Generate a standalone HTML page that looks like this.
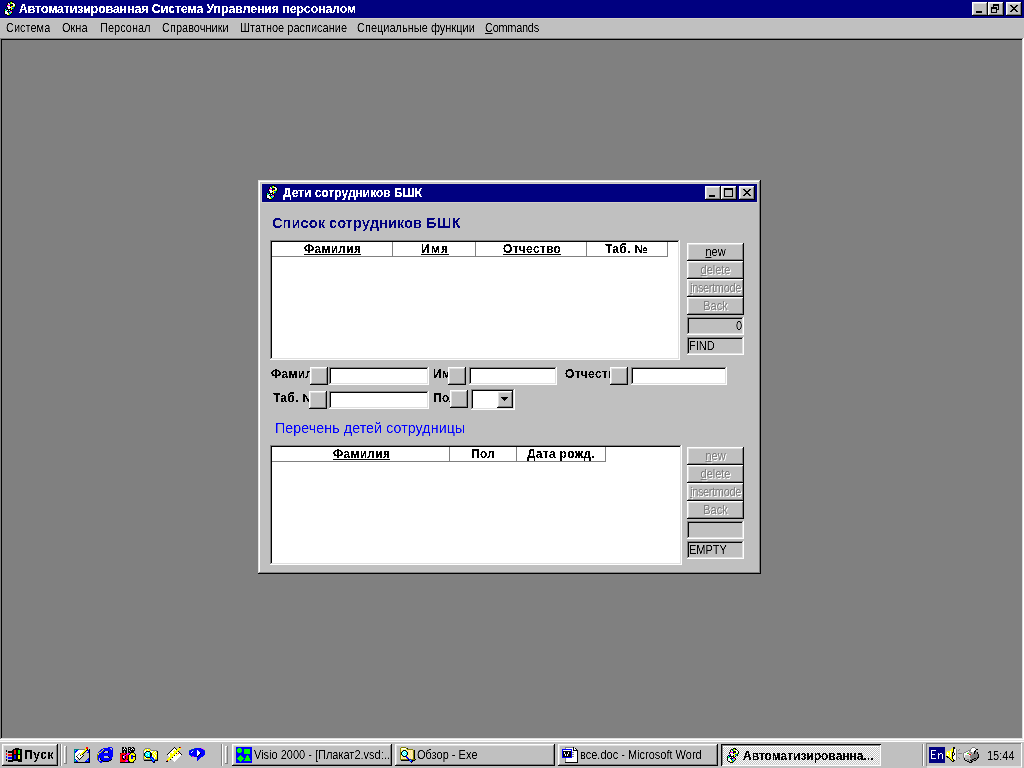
<!DOCTYPE html>
<html><head><meta charset="utf-8">
<style>
*{box-sizing:border-box;margin:0;padding:0}
html,body{width:1024px;height:768px;overflow:hidden;background:#c0c0c0;font-family:"Liberation Sans",sans-serif;font-size:11px;color:#000}
.a{position:absolute}
.t{position:absolute;white-space:nowrap;line-height:13px;filter:url(#crisp)}
.t.b{filter:url(#crispb)}
.s{transform:scaleY(1.125);transform-origin:0 10px}
.b{font-weight:bold}
.raised{position:absolute;background:#c0c0c0;box-shadow:inset -1px -1px #000,inset 1px 1px #fff,inset -2px -2px #808080,inset 2px 2px #dfdfdf}
.sunk{position:absolute;background:#fff;box-shadow:inset -1px -1px #fff,inset 1px 1px #808080,inset -2px -2px #dfdfdf,inset 2px 2px #000}
.sunkg{position:absolute;background:#c0c0c0;box-shadow:inset -1px -1px #fff,inset 1px 1px #808080,inset -2px -2px #dfdfdf,inset 2px 2px #000}
.thin{position:absolute;box-shadow:inset -1px -1px #fff,inset 1px 1px #808080}
.cap{position:absolute;background:#000080}
.cbtn{position:absolute;width:16px;height:14px;background:#c0c0c0;box-shadow:inset -1px -1px #000,inset 1px 1px #fff,inset -2px -2px #808080,inset 2px 2px #dfdfdf}
.dis{color:#808080;text-shadow:1px 1px #fff}
.u{text-decoration:underline}
.hl{position:absolute;background:#808080}
</style></head>
<body><svg width="0" height="0" style="position:absolute"><filter id="crisp" x="0" y="0" width="100%" height="100%"><feComponentTransfer><feFuncA type="table" tableValues="0 0 0.5 1 1"/></feComponentTransfer></filter><filter id="crispb" x="0" y="0" width="100%" height="100%"><feComponentTransfer><feFuncA type="discrete" tableValues="0 0 0 0 1 1 1 1 1"/></feComponentTransfer></filter><filter id="crisph" x="0" y="0" width="100%" height="100%"><feComponentTransfer><feFuncA type="discrete" tableValues="0 0 0 0 0 1 1 1 1"/></feComponentTransfer></filter></svg>
<!-- main title bar -->
<div class="cap" style="left:0;top:0;width:1024px;height:18px"></div>
<div class="a" style="left:0;top:18px;width:1024px;height:1px;background:#d4d0c8"></div>
<div class="t b" style="left:19px;top:3px;font-size:12.2px;color:#fff">Автоматизированная Система Управления персоналом</div>
<div class="cbtn" style="left:972px;top:2px"></div>
<div class="cbtn" style="left:988px;top:2px"></div>
<div class="cbtn" style="left:1006px;top:2px"></div>

<!-- menu -->
<div class="s t" style="left:6px;top:22px">Система</div>
<div class="s t" style="left:62px;top:22px">Окна</div>
<div class="s t" style="left:100px;top:22px">Персонал</div>
<div class="s t" style="left:162px;top:22px">Справочники</div>
<div class="s t" style="left:240px;top:22px">Штатное расписание</div>
<div class="s t" style="left:357px;top:22px">Специальные функции</div>
<div class="s t" style="left:485px;top:22px;letter-spacing:-0.3px"><span class="u">C</span>ommands</div>

<!-- MDI client -->
<div class="a" style="left:0;top:38px;width:1024px;height:702px;background:#808080;box-shadow:inset -1px -1px #fff,inset 1px 1px #808080,inset -2px -2px #dfdfdf,inset 2px 2px #000"></div>

<!-- child window -->
<div class="a" style="left:258px;top:180px;width:503px;height:394px;background:#c0c0c0;box-shadow:inset -1px -1px #000,inset 1px 1px #dfdfdf,inset -2px -2px #808080,inset 2px 2px #fff"></div>
<div class="a" style="left:261px;top:183px;width:497px;height:20px;border:1px solid #d4d0c8"></div>
<div class="cap" style="left:262px;top:184px;width:495px;height:18px"></div>
<div class="t b" style="left:283px;top:187px;font-size:12px;color:#fff">Дети сотрудников БШК</div>
<div class="cbtn" style="left:705px;top:186px"></div>
<div class="cbtn" style="left:721px;top:186px"></div>
<div class="cbtn" style="left:739px;top:186px"></div>

<div class="t b" style="left:272px;top:214px;font-size:14.7px;line-height:18px;color:#000080;filter:url(#crisph)">Список сотрудников БШК</div>

<!-- listbox 1 -->
<div class="sunk" style="left:270px;top:240px;width:410px;height:120px"></div>

<!-- buttons col 1 -->
<div class="raised" style="left:687px;top:243px;width:57px;height:18px"></div>
<div class="raised" style="left:687px;top:261px;width:57px;height:18px"></div>
<div class="raised" style="left:687px;top:279px;width:57px;height:18px"></div>
<div class="raised" style="left:687px;top:297px;width:57px;height:18px"></div>
<div class="sunkg" style="left:687px;top:317px;width:57px;height:18px"></div>
<div class="sunkg" style="left:687px;top:337px;width:57px;height:18px"></div>

<!-- row fields -->
<div class="raised" style="left:310px;top:367px;width:18px;height:18px"></div>
<div class="sunk" style="left:329px;top:367px;width:100px;height:18px"></div>
<div class="raised" style="left:448px;top:367px;width:18px;height:18px"></div>
<div class="sunk" style="left:469px;top:367px;width:88px;height:18px"></div>
<div class="raised" style="left:610px;top:367px;width:18px;height:18px"></div>
<div class="sunk" style="left:631px;top:367px;width:96px;height:18px"></div>

<div class="raised" style="left:309px;top:391px;width:18px;height:18px"></div>
<div class="sunk" style="left:329px;top:391px;width:100px;height:18px"></div>
<div class="raised" style="left:450px;top:390px;width:18px;height:18px"></div>
<div class="sunk" style="left:471px;top:389px;width:44px;height:21px"></div>

<div class="t" style="left:275px;top:420px;font-size:14.2px;line-height:17px;color:#0000ff;letter-spacing:0.1px">Перечень детей сотрудницы</div>

<!-- listbox 2 -->
<div class="sunk" style="left:270px;top:445px;width:412px;height:120px"></div>
<div class="raised" style="left:687px;top:447px;width:57px;height:18px"></div>
<div class="raised" style="left:687px;top:465px;width:57px;height:18px"></div>
<div class="raised" style="left:687px;top:483px;width:57px;height:18px"></div>
<div class="raised" style="left:687px;top:501px;width:57px;height:18px"></div>
<div class="sunkg" style="left:687px;top:521px;width:57px;height:18px"></div>
<div class="sunkg" style="left:687px;top:541px;width:57px;height:18px"></div>


<!-- list1 header -->
<div class="hl" style="left:272px;top:256px;width:396px;height:1px"></div>
<div class="hl" style="left:392px;top:242px;width:1px;height:14px"></div>
<div class="hl" style="left:475px;top:242px;width:1px;height:14px"></div>
<div class="hl" style="left:586px;top:242px;width:1px;height:14px"></div>
<div class="hl" style="left:667px;top:242px;width:1px;height:15px"></div>
<div class="t b u" style="left:304px;top:243px;font-size:12px;letter-spacing:0.3px">Фамилия</div>
<div class="t b u" style="left:421px;top:243px;font-size:12px;letter-spacing:1.3px">Имя</div>
<div class="t b u" style="left:503px;top:243px;font-size:12px;letter-spacing:0.3px">Отчество</div>
<div class="t b" style="left:605px;top:243px;font-size:12px;letter-spacing:0.3px">Таб. №</div>
<!-- list1 buttons text -->
<div class="s t" style="left:687px;top:246px;width:57px;text-align:center"><span class="u">n</span>ew</div>
<div class="s t dis" style="left:687px;top:264px;width:57px;text-align:center"><span class="u">d</span>elete</div>
<div class="s t dis" style="left:687px;top:282px;width:57px;text-align:center"><span style="letter-spacing:-0.35px"><span class="u">i</span>nsertmode</span></div>
<div class="s t dis" style="left:687px;top:300px;width:57px;text-align:center">Back</div>
<div class="s t" style="left:687px;top:320px;width:55px;text-align:right">0</div>
<div class="s t" style="left:689px;top:340px">FIND</div>
<!-- labels -->
<div class="a" style="left:270px;top:364px;width:40px;height:20px;overflow:hidden"><div class="t b" style="left:1px;top:4px;font-size:12px;letter-spacing:0.3px">Фамилия</div></div>
<div class="a" style="left:430px;top:364px;width:18px;height:20px;overflow:hidden"><div class="t b" style="left:3px;top:4px;font-size:12px;letter-spacing:0.3px">Имя</div></div>
<div class="a" style="left:560px;top:364px;width:50px;height:20px;overflow:hidden"><div class="t b" style="left:5px;top:4px;font-size:12px;letter-spacing:0.3px">Отчество</div></div>
<div class="a" style="left:270px;top:388px;width:39px;height:20px;overflow:hidden"><div class="t b" style="left:3px;top:4px;font-size:12px;letter-spacing:0.3px">Таб. №</div></div>
<div class="a" style="left:430px;top:388px;width:20px;height:20px;overflow:hidden"><div class="t b" style="left:3px;top:4px;font-size:12px;letter-spacing:0.3px">Пол</div></div>
<!-- combo button -->
<div class="raised" style="left:497px;top:391px;width:16px;height:17px"></div>
<!-- list2 header -->
<div class="hl" style="left:272px;top:461px;width:334px;height:1px"></div>
<div class="hl" style="left:449px;top:447px;width:1px;height:14px"></div>
<div class="hl" style="left:516px;top:447px;width:1px;height:14px"></div>
<div class="hl" style="left:605px;top:447px;width:1px;height:15px"></div>
<div class="t b u" style="left:333px;top:448px;font-size:12px;letter-spacing:0.3px">Фамилия</div>
<div class="t b" style="left:471px;top:448px;font-size:12px;letter-spacing:0.3px">Пол</div>
<div class="t b" style="left:527px;top:448px;font-size:12px;letter-spacing:0.3px">Дата рожд.</div>
<div class="s t dis" style="left:687px;top:450px;width:57px;text-align:center"><span class="u">n</span>ew</div>
<div class="s t dis" style="left:687px;top:468px;width:57px;text-align:center"><span class="u">d</span>elete</div>
<div class="s t dis" style="left:687px;top:486px;width:57px;text-align:center"><span style="letter-spacing:-0.35px"><span class="u">i</span>nsertmode</span></div>
<div class="s t dis" style="left:687px;top:504px;width:57px;text-align:center">Back</div>
<div class="s t" style="left:689px;top:544px">EMPTY</div>

<!-- taskbar -->
<div class="a" style="left:0;top:740px;width:1024px;height:28px;background:#c0c0c0;box-shadow:inset 0 1px #dfdfdf,inset 0 2px #fff"></div>
<div class="raised" style="left:2px;top:744px;width:56px;height:22px"></div>
<div class="t b" style="left:24px;top:749px;font-size:12px;letter-spacing:0.6px">Пуск</div>
<div class="a" style="left:60px;top:744px;width:1px;height:22px;background:#808080"></div>
<div class="a" style="left:61px;top:744px;width:1px;height:22px;background:#fff"></div>
<div class="a" style="left:64px;top:746px;width:3px;height:18px;box-shadow:inset -1px -1px #808080,inset 1px 1px #fff"></div>
<div class="a" style="left:221px;top:744px;width:1px;height:22px;background:#808080"></div>
<div class="a" style="left:222px;top:744px;width:1px;height:22px;background:#fff"></div>
<div class="a" style="left:225px;top:746px;width:3px;height:18px;box-shadow:inset -1px -1px #808080,inset 1px 1px #fff"></div>
<div class="raised" style="left:232px;top:744px;width:160px;height:22px"></div>
<div class="s t" style="left:254px;top:749px">Visio 2000 - [Плакат2.vsd:...</div>
<div class="raised" style="left:395px;top:744px;width:160px;height:22px"></div>
<div class="s t" style="left:417px;top:749px">Обзор - Exe</div>
<div class="raised" style="left:558px;top:744px;width:160px;height:22px"></div>
<div class="s t" style="left:580px;top:749px">все.doc - Microsoft Word</div>
<div class="a" style="left:721px;top:744px;width:160px;height:22px;background-color:#c0c0c0;background-image:repeating-conic-gradient(#fff 0 25%,#c0c0c0 0 50%);background-size:2px 2px;box-shadow:inset 1px 1px #000,inset -1px -1px #fff,inset 2px 2px #808080,inset -2px -2px #dfdfdf,inset 0 3px #fff"></div>
<div class="t b" style="left:743px;top:750px;font-size:12px">Автоматизированна...</div>
<div class="a" style="left:922px;top:744px;width:1px;height:22px;background:#808080"></div>
<div class="a" style="left:923px;top:744px;width:1px;height:22px;background:#fff"></div>
<div class="s thin" style="left:926px;top:744px;width:96px;height:22px"></div>
<div class="a" style="left:929px;top:747px;width:16px;height:16px;background:#000080"></div>
<div class="s t" style="left:987px;top:750px">15:44</div>
<!--ICONS-->
<svg class="a" style="left:2px;top:0px" width="16" height="16" shape-rendering="crispEdges"><rect x="8" y="1" width="3" height="1" fill="#000"/><rect x="6" y="2" width="2" height="1" fill="#000"/><rect x="8" y="2" width="1" height="1" fill="#0f0"/><rect x="9" y="2" width="1" height="1" fill="#ff0"/><rect x="10" y="2" width="2" height="1" fill="#000"/><rect x="5" y="3" width="1" height="1" fill="#000"/><rect x="6" y="3" width="1" height="1" fill="#fff"/><rect x="7" y="3" width="1" height="1" fill="#00f"/><rect x="8" y="3" width="1" height="1" fill="#0f0"/><rect x="9" y="3" width="1" height="1" fill="#ff0"/><rect x="10" y="3" width="2" height="1" fill="#fff"/><rect x="12" y="3" width="1" height="1" fill="#000"/><rect x="5" y="4" width="1" height="1" fill="#000"/><rect x="6" y="4" width="1" height="1" fill="#ff0"/><rect x="7" y="4" width="1" height="1" fill="#fff"/><rect x="8" y="4" width="3" height="1" fill="#000"/><rect x="11" y="4" width="2" height="1" fill="#fff"/><rect x="13" y="4" width="1" height="1" fill="#000"/><rect x="4" y="5" width="1" height="1" fill="#000"/><rect x="5" y="5" width="3" height="1" fill="#f0f"/><rect x="8" y="5" width="1" height="1" fill="#000"/><rect x="9" y="5" width="1" height="1" fill="#000080"/><rect x="10" y="5" width="1" height="1" fill="#000"/><rect x="11" y="5" width="2" height="1" fill="#fff"/><rect x="13" y="5" width="1" height="1" fill="#000"/><rect x="4" y="6" width="1" height="1" fill="#000"/><rect x="5" y="6" width="3" height="1" fill="#fff"/><rect x="8" y="6" width="1" height="1" fill="#000"/><rect x="9" y="6" width="3" height="1" fill="#ff0"/><rect x="12" y="6" width="1" height="1" fill="#0f0"/><rect x="13" y="6" width="1" height="1" fill="#000"/><rect x="5" y="7" width="1" height="1" fill="#000"/><rect x="6" y="7" width="3" height="1" fill="#fff"/><rect x="9" y="7" width="1" height="1" fill="#ff0"/><rect x="10" y="7" width="1" height="1" fill="#00f"/><rect x="11" y="7" width="1" height="1" fill="#008080"/><rect x="12" y="7" width="1" height="1" fill="#000"/><rect x="3" y="8" width="1" height="1" fill="#000"/><rect x="4" y="8" width="1" height="1" fill="#00f"/><rect x="5" y="8" width="1" height="1" fill="#000"/><rect x="6" y="8" width="2" height="1" fill="#fff"/><rect x="8" y="8" width="1" height="1" fill="#000"/><rect x="9" y="8" width="1" height="1" fill="#ff0"/><rect x="10" y="8" width="1" height="1" fill="#0ff"/><rect x="11" y="8" width="1" height="1" fill="#008080"/><rect x="12" y="8" width="1" height="1" fill="#000"/><rect x="2" y="9" width="1" height="1" fill="#000"/><rect x="3" y="9" width="1" height="1" fill="#0ff"/><rect x="4" y="9" width="5" height="1" fill="#000"/><rect x="9" y="9" width="1" height="1" fill="#ff0"/><rect x="10" y="9" width="1" height="1" fill="#000"/><rect x="2" y="10" width="1" height="1" fill="#000"/><rect x="3" y="10" width="1" height="1" fill="#0f0"/><rect x="4" y="10" width="1" height="1" fill="#0ff"/><rect x="5" y="10" width="1" height="1" fill="#fff"/><rect x="6" y="10" width="1" height="1" fill="#000"/><rect x="7" y="10" width="1" height="1" fill="#fff"/><rect x="8" y="10" width="2" height="1" fill="#000"/><rect x="2" y="11" width="1" height="1" fill="#000"/><rect x="3" y="11" width="2" height="1" fill="#fff"/><rect x="5" y="11" width="1" height="1" fill="#000"/><rect x="6" y="11" width="1" height="1" fill="#000080"/><rect x="7" y="11" width="1" height="1" fill="#000"/><rect x="8" y="11" width="2" height="1" fill="#f0f"/><rect x="10" y="11" width="1" height="1" fill="#000"/><rect x="2" y="12" width="1" height="1" fill="#000"/><rect x="3" y="12" width="3" height="1" fill="#fff"/><rect x="6" y="12" width="1" height="1" fill="#000"/><rect x="7" y="12" width="2" height="1" fill="#0ff"/><rect x="9" y="12" width="1" height="1" fill="#ff0"/><rect x="10" y="12" width="1" height="1" fill="#000"/><rect x="2" y="13" width="1" height="1" fill="#000"/><rect x="3" y="13" width="3" height="1" fill="#fff"/><rect x="6" y="13" width="1" height="1" fill="#ff0"/><rect x="7" y="13" width="1" height="1" fill="#00f"/><rect x="8" y="13" width="1" height="1" fill="#0ff"/><rect x="9" y="13" width="1" height="1" fill="#000"/><rect x="3" y="14" width="2" height="1" fill="#000"/><rect x="5" y="14" width="1" height="1" fill="#fff"/><rect x="6" y="14" width="1" height="1" fill="#ff0"/><rect x="7" y="14" width="1" height="1" fill="#0f0"/><rect x="8" y="14" width="1" height="1" fill="#000"/><rect x="5" y="15" width="3" height="1" fill="#000"/></svg>
<svg class="a" style="left:264px;top:184px" width="16" height="16" shape-rendering="crispEdges"><rect x="8" y="1" width="3" height="1" fill="#000"/><rect x="6" y="2" width="2" height="1" fill="#000"/><rect x="8" y="2" width="1" height="1" fill="#0f0"/><rect x="9" y="2" width="1" height="1" fill="#ff0"/><rect x="10" y="2" width="2" height="1" fill="#000"/><rect x="5" y="3" width="1" height="1" fill="#000"/><rect x="6" y="3" width="1" height="1" fill="#fff"/><rect x="7" y="3" width="1" height="1" fill="#00f"/><rect x="8" y="3" width="1" height="1" fill="#0f0"/><rect x="9" y="3" width="1" height="1" fill="#ff0"/><rect x="10" y="3" width="2" height="1" fill="#fff"/><rect x="12" y="3" width="1" height="1" fill="#000"/><rect x="5" y="4" width="1" height="1" fill="#000"/><rect x="6" y="4" width="1" height="1" fill="#ff0"/><rect x="7" y="4" width="1" height="1" fill="#fff"/><rect x="8" y="4" width="3" height="1" fill="#000"/><rect x="11" y="4" width="2" height="1" fill="#fff"/><rect x="13" y="4" width="1" height="1" fill="#000"/><rect x="4" y="5" width="1" height="1" fill="#000"/><rect x="5" y="5" width="3" height="1" fill="#f0f"/><rect x="8" y="5" width="1" height="1" fill="#000"/><rect x="9" y="5" width="1" height="1" fill="#000080"/><rect x="10" y="5" width="1" height="1" fill="#000"/><rect x="11" y="5" width="2" height="1" fill="#fff"/><rect x="13" y="5" width="1" height="1" fill="#000"/><rect x="4" y="6" width="1" height="1" fill="#000"/><rect x="5" y="6" width="3" height="1" fill="#fff"/><rect x="8" y="6" width="1" height="1" fill="#000"/><rect x="9" y="6" width="3" height="1" fill="#ff0"/><rect x="12" y="6" width="1" height="1" fill="#0f0"/><rect x="13" y="6" width="1" height="1" fill="#000"/><rect x="5" y="7" width="1" height="1" fill="#000"/><rect x="6" y="7" width="3" height="1" fill="#fff"/><rect x="9" y="7" width="1" height="1" fill="#ff0"/><rect x="10" y="7" width="1" height="1" fill="#00f"/><rect x="11" y="7" width="1" height="1" fill="#008080"/><rect x="12" y="7" width="1" height="1" fill="#000"/><rect x="3" y="8" width="1" height="1" fill="#000"/><rect x="4" y="8" width="1" height="1" fill="#00f"/><rect x="5" y="8" width="1" height="1" fill="#000"/><rect x="6" y="8" width="2" height="1" fill="#fff"/><rect x="8" y="8" width="1" height="1" fill="#000"/><rect x="9" y="8" width="1" height="1" fill="#ff0"/><rect x="10" y="8" width="1" height="1" fill="#0ff"/><rect x="11" y="8" width="1" height="1" fill="#008080"/><rect x="12" y="8" width="1" height="1" fill="#000"/><rect x="2" y="9" width="1" height="1" fill="#000"/><rect x="3" y="9" width="1" height="1" fill="#0ff"/><rect x="4" y="9" width="5" height="1" fill="#000"/><rect x="9" y="9" width="1" height="1" fill="#ff0"/><rect x="10" y="9" width="1" height="1" fill="#000"/><rect x="2" y="10" width="1" height="1" fill="#000"/><rect x="3" y="10" width="1" height="1" fill="#0f0"/><rect x="4" y="10" width="1" height="1" fill="#0ff"/><rect x="5" y="10" width="1" height="1" fill="#fff"/><rect x="6" y="10" width="1" height="1" fill="#000"/><rect x="7" y="10" width="1" height="1" fill="#fff"/><rect x="8" y="10" width="2" height="1" fill="#000"/><rect x="2" y="11" width="1" height="1" fill="#000"/><rect x="3" y="11" width="2" height="1" fill="#fff"/><rect x="5" y="11" width="1" height="1" fill="#000"/><rect x="6" y="11" width="1" height="1" fill="#000080"/><rect x="7" y="11" width="1" height="1" fill="#000"/><rect x="8" y="11" width="2" height="1" fill="#f0f"/><rect x="10" y="11" width="1" height="1" fill="#000"/><rect x="2" y="12" width="1" height="1" fill="#000"/><rect x="3" y="12" width="3" height="1" fill="#fff"/><rect x="6" y="12" width="1" height="1" fill="#000"/><rect x="7" y="12" width="2" height="1" fill="#0ff"/><rect x="9" y="12" width="1" height="1" fill="#ff0"/><rect x="10" y="12" width="1" height="1" fill="#000"/><rect x="2" y="13" width="1" height="1" fill="#000"/><rect x="3" y="13" width="3" height="1" fill="#fff"/><rect x="6" y="13" width="1" height="1" fill="#ff0"/><rect x="7" y="13" width="1" height="1" fill="#00f"/><rect x="8" y="13" width="1" height="1" fill="#0ff"/><rect x="9" y="13" width="1" height="1" fill="#000"/><rect x="3" y="14" width="2" height="1" fill="#000"/><rect x="5" y="14" width="1" height="1" fill="#fff"/><rect x="6" y="14" width="1" height="1" fill="#ff0"/><rect x="7" y="14" width="1" height="1" fill="#0f0"/><rect x="8" y="14" width="1" height="1" fill="#000"/><rect x="5" y="15" width="3" height="1" fill="#000"/></svg>
<svg class="a" style="left:725px;top:747px" width="16" height="16" shape-rendering="crispEdges"><rect x="8" y="1" width="3" height="1" fill="#000"/><rect x="6" y="2" width="2" height="1" fill="#000"/><rect x="8" y="2" width="1" height="1" fill="#0f0"/><rect x="9" y="2" width="1" height="1" fill="#ff0"/><rect x="10" y="2" width="2" height="1" fill="#000"/><rect x="5" y="3" width="1" height="1" fill="#000"/><rect x="6" y="3" width="1" height="1" fill="#fff"/><rect x="7" y="3" width="1" height="1" fill="#00f"/><rect x="8" y="3" width="1" height="1" fill="#0f0"/><rect x="9" y="3" width="1" height="1" fill="#ff0"/><rect x="10" y="3" width="2" height="1" fill="#fff"/><rect x="12" y="3" width="1" height="1" fill="#000"/><rect x="5" y="4" width="1" height="1" fill="#000"/><rect x="6" y="4" width="1" height="1" fill="#ff0"/><rect x="7" y="4" width="1" height="1" fill="#fff"/><rect x="8" y="4" width="3" height="1" fill="#000"/><rect x="11" y="4" width="2" height="1" fill="#fff"/><rect x="13" y="4" width="1" height="1" fill="#000"/><rect x="4" y="5" width="1" height="1" fill="#000"/><rect x="5" y="5" width="3" height="1" fill="#f0f"/><rect x="8" y="5" width="1" height="1" fill="#000"/><rect x="9" y="5" width="1" height="1" fill="#000080"/><rect x="10" y="5" width="1" height="1" fill="#000"/><rect x="11" y="5" width="2" height="1" fill="#fff"/><rect x="13" y="5" width="1" height="1" fill="#000"/><rect x="4" y="6" width="1" height="1" fill="#000"/><rect x="5" y="6" width="3" height="1" fill="#fff"/><rect x="8" y="6" width="1" height="1" fill="#000"/><rect x="9" y="6" width="3" height="1" fill="#ff0"/><rect x="12" y="6" width="1" height="1" fill="#0f0"/><rect x="13" y="6" width="1" height="1" fill="#000"/><rect x="5" y="7" width="1" height="1" fill="#000"/><rect x="6" y="7" width="3" height="1" fill="#fff"/><rect x="9" y="7" width="1" height="1" fill="#ff0"/><rect x="10" y="7" width="1" height="1" fill="#00f"/><rect x="11" y="7" width="1" height="1" fill="#008080"/><rect x="12" y="7" width="1" height="1" fill="#000"/><rect x="3" y="8" width="1" height="1" fill="#000"/><rect x="4" y="8" width="1" height="1" fill="#00f"/><rect x="5" y="8" width="1" height="1" fill="#000"/><rect x="6" y="8" width="2" height="1" fill="#fff"/><rect x="8" y="8" width="1" height="1" fill="#000"/><rect x="9" y="8" width="1" height="1" fill="#ff0"/><rect x="10" y="8" width="1" height="1" fill="#0ff"/><rect x="11" y="8" width="1" height="1" fill="#008080"/><rect x="12" y="8" width="1" height="1" fill="#000"/><rect x="2" y="9" width="1" height="1" fill="#000"/><rect x="3" y="9" width="1" height="1" fill="#0ff"/><rect x="4" y="9" width="5" height="1" fill="#000"/><rect x="9" y="9" width="1" height="1" fill="#ff0"/><rect x="10" y="9" width="1" height="1" fill="#000"/><rect x="2" y="10" width="1" height="1" fill="#000"/><rect x="3" y="10" width="1" height="1" fill="#0f0"/><rect x="4" y="10" width="1" height="1" fill="#0ff"/><rect x="5" y="10" width="1" height="1" fill="#fff"/><rect x="6" y="10" width="1" height="1" fill="#000"/><rect x="7" y="10" width="1" height="1" fill="#fff"/><rect x="8" y="10" width="2" height="1" fill="#000"/><rect x="2" y="11" width="1" height="1" fill="#000"/><rect x="3" y="11" width="2" height="1" fill="#fff"/><rect x="5" y="11" width="1" height="1" fill="#000"/><rect x="6" y="11" width="1" height="1" fill="#000080"/><rect x="7" y="11" width="1" height="1" fill="#000"/><rect x="8" y="11" width="2" height="1" fill="#f0f"/><rect x="10" y="11" width="1" height="1" fill="#000"/><rect x="2" y="12" width="1" height="1" fill="#000"/><rect x="3" y="12" width="3" height="1" fill="#fff"/><rect x="6" y="12" width="1" height="1" fill="#000"/><rect x="7" y="12" width="2" height="1" fill="#0ff"/><rect x="9" y="12" width="1" height="1" fill="#ff0"/><rect x="10" y="12" width="1" height="1" fill="#000"/><rect x="2" y="13" width="1" height="1" fill="#000"/><rect x="3" y="13" width="3" height="1" fill="#fff"/><rect x="6" y="13" width="1" height="1" fill="#ff0"/><rect x="7" y="13" width="1" height="1" fill="#00f"/><rect x="8" y="13" width="1" height="1" fill="#0ff"/><rect x="9" y="13" width="1" height="1" fill="#000"/><rect x="3" y="14" width="2" height="1" fill="#000"/><rect x="5" y="14" width="1" height="1" fill="#fff"/><rect x="6" y="14" width="1" height="1" fill="#ff0"/><rect x="7" y="14" width="1" height="1" fill="#0f0"/><rect x="8" y="14" width="1" height="1" fill="#000"/><rect x="5" y="15" width="3" height="1" fill="#000"/></svg>
<svg class="a" style="left:5px;top:746px" width="18" height="16" shape-rendering="crispEdges"><rect x="10" y="2" width="4" height="1" fill="#000"/><rect x="8" y="3" width="9" height="1" fill="#000"/><rect x="1" y="4" width="1" height="1" fill="#000"/><rect x="7" y="4" width="2" height="1" fill="#000"/><rect x="9" y="4" width="2" height="1" fill="#f00"/><rect x="11" y="4" width="2" height="1" fill="#000"/><rect x="13" y="4" width="2" height="1" fill="#0f0"/><rect x="15" y="4" width="2" height="1" fill="#000"/><rect x="1" y="5" width="1" height="1" fill="#000"/><rect x="3" y="5" width="6" height="1" fill="#000"/><rect x="9" y="5" width="2" height="1" fill="#f00"/><rect x="11" y="5" width="2" height="1" fill="#000"/><rect x="13" y="5" width="2" height="1" fill="#0f0"/><rect x="15" y="5" width="2" height="1" fill="#000"/><rect x="3" y="6" width="6" height="1" fill="#000"/><rect x="9" y="6" width="2" height="1" fill="#f00"/><rect x="11" y="6" width="2" height="1" fill="#000"/><rect x="13" y="6" width="2" height="1" fill="#0f0"/><rect x="15" y="6" width="2" height="1" fill="#000"/><rect x="1" y="7" width="1" height="1" fill="#f00"/><rect x="7" y="7" width="2" height="1" fill="#000"/><rect x="9" y="7" width="2" height="1" fill="#f00"/><rect x="11" y="7" width="2" height="1" fill="#000"/><rect x="13" y="7" width="2" height="1" fill="#0f0"/><rect x="15" y="7" width="2" height="1" fill="#000"/><rect x="1" y="8" width="1" height="1" fill="#f00"/><rect x="3" y="8" width="4" height="1" fill="#f00"/><rect x="7" y="8" width="10" height="1" fill="#000"/><rect x="3" y="9" width="4" height="1" fill="#f00"/><rect x="7" y="9" width="2" height="1" fill="#000"/><rect x="9" y="9" width="2" height="1" fill="#00f"/><rect x="11" y="9" width="2" height="1" fill="#000"/><rect x="13" y="9" width="2" height="1" fill="#ff0"/><rect x="15" y="9" width="2" height="1" fill="#000"/><rect x="1" y="10" width="1" height="1" fill="#00f"/><rect x="7" y="10" width="2" height="1" fill="#000"/><rect x="9" y="10" width="2" height="1" fill="#00f"/><rect x="11" y="10" width="2" height="1" fill="#000"/><rect x="13" y="10" width="2" height="1" fill="#ff0"/><rect x="15" y="10" width="2" height="1" fill="#000"/><rect x="1" y="11" width="1" height="1" fill="#00f"/><rect x="3" y="11" width="4" height="1" fill="#00f"/><rect x="7" y="11" width="2" height="1" fill="#000"/><rect x="9" y="11" width="2" height="1" fill="#00f"/><rect x="11" y="11" width="2" height="1" fill="#000"/><rect x="13" y="11" width="2" height="1" fill="#ff0"/><rect x="15" y="11" width="2" height="1" fill="#000"/><rect x="3" y="12" width="4" height="1" fill="#00f"/><rect x="7" y="12" width="2" height="1" fill="#000"/><rect x="9" y="12" width="2" height="1" fill="#00f"/><rect x="11" y="12" width="2" height="1" fill="#000"/><rect x="13" y="12" width="2" height="1" fill="#ff0"/><rect x="15" y="12" width="2" height="1" fill="#000"/><rect x="1" y="13" width="1" height="1" fill="#000"/><rect x="7" y="13" width="10" height="1" fill="#000"/><rect x="1" y="14" width="1" height="1" fill="#000"/><rect x="3" y="14" width="14" height="1" fill="#000"/><rect x="3" y="15" width="5" height="1" fill="#000"/><rect x="13" y="15" width="4" height="1" fill="#000"/></svg>
<svg class="a" style="left:73px;top:745px" width="17" height="18" shape-rendering="crispEdges"><rect x="13" y="2" width="2" height="1" fill="#f00"/><rect x="12" y="3" width="1" height="1" fill="#ff0"/><rect x="13" y="3" width="2" height="1" fill="#f00"/><rect x="1" y="4" width="5" height="1" fill="#008080"/><rect x="6" y="4" width="6" height="1" fill="#808080"/><rect x="12" y="4" width="2" height="1" fill="#ff0"/><rect x="14" y="4" width="1" height="1" fill="#000"/><rect x="16" y="4" width="1" height="1" fill="#000"/><rect x="1" y="5" width="1" height="1" fill="#008080"/><rect x="2" y="5" width="1" height="1" fill="#0ff"/><rect x="3" y="5" width="2" height="1" fill="#00f"/><rect x="5" y="5" width="6" height="1" fill="#fff"/><rect x="11" y="5" width="2" height="1" fill="#ff0"/><rect x="13" y="5" width="1" height="1" fill="#000"/><rect x="14" y="5" width="2" height="1" fill="#00f"/><rect x="16" y="5" width="1" height="1" fill="#000"/><rect x="1" y="6" width="1" height="1" fill="#008080"/><rect x="2" y="6" width="2" height="1" fill="#00f"/><rect x="4" y="6" width="6" height="1" fill="#fff"/><rect x="10" y="6" width="2" height="1" fill="#ff0"/><rect x="12" y="6" width="1" height="1" fill="#000"/><rect x="13" y="6" width="1" height="1" fill="#c0c0c0"/><rect x="14" y="6" width="1" height="1" fill="#fff"/><rect x="15" y="6" width="1" height="1" fill="#00f"/><rect x="16" y="6" width="1" height="1" fill="#000"/><rect x="1" y="7" width="1" height="1" fill="#008080"/><rect x="2" y="7" width="1" height="1" fill="#00f"/><rect x="3" y="7" width="6" height="1" fill="#fff"/><rect x="9" y="7" width="2" height="1" fill="#ff0"/><rect x="11" y="7" width="1" height="1" fill="#000"/><rect x="12" y="7" width="2" height="1" fill="#c0c0c0"/><rect x="14" y="7" width="2" height="1" fill="#00f"/><rect x="16" y="7" width="1" height="1" fill="#000"/><rect x="1" y="8" width="1" height="1" fill="#008080"/><rect x="2" y="8" width="4" height="1" fill="#fff"/><rect x="6" y="8" width="1" height="1" fill="#808080"/><rect x="7" y="8" width="1" height="1" fill="#fff"/><rect x="8" y="8" width="2" height="1" fill="#ff0"/><rect x="10" y="8" width="1" height="1" fill="#000"/><rect x="11" y="8" width="5" height="1" fill="#c0c0c0"/><rect x="16" y="8" width="1" height="1" fill="#000"/><rect x="1" y="9" width="1" height="1" fill="#008080"/><rect x="2" y="9" width="3" height="1" fill="#fff"/><rect x="5" y="9" width="1" height="1" fill="#808080"/><rect x="6" y="9" width="1" height="1" fill="#fff"/><rect x="7" y="9" width="2" height="1" fill="#ff0"/><rect x="9" y="9" width="1" height="1" fill="#000"/><rect x="10" y="9" width="6" height="1" fill="#c0c0c0"/><rect x="16" y="9" width="1" height="1" fill="#000"/><rect x="1" y="10" width="1" height="1" fill="#008080"/><rect x="2" y="10" width="2" height="1" fill="#fff"/><rect x="4" y="10" width="1" height="1" fill="#808080"/><rect x="5" y="10" width="2" height="1" fill="#fff"/><rect x="7" y="10" width="1" height="1" fill="#000"/><rect x="8" y="10" width="2" height="1" fill="#fff"/><rect x="10" y="10" width="1" height="1" fill="#000"/><rect x="11" y="10" width="5" height="1" fill="#c0c0c0"/><rect x="16" y="10" width="1" height="1" fill="#000"/><rect x="1" y="11" width="1" height="1" fill="#008080"/><rect x="2" y="11" width="1" height="1" fill="#fff"/><rect x="3" y="11" width="1" height="1" fill="#000"/><rect x="4" y="11" width="5" height="1" fill="#fff"/><rect x="9" y="11" width="1" height="1" fill="#000"/><rect x="10" y="11" width="6" height="1" fill="#c0c0c0"/><rect x="16" y="11" width="1" height="1" fill="#000"/><rect x="1" y="12" width="1" height="1" fill="#008080"/><rect x="2" y="12" width="2" height="1" fill="#fff"/><rect x="4" y="12" width="1" height="1" fill="#000"/><rect x="5" y="12" width="3" height="1" fill="#fff"/><rect x="8" y="12" width="1" height="1" fill="#000"/><rect x="9" y="12" width="7" height="1" fill="#c0c0c0"/><rect x="16" y="12" width="1" height="1" fill="#000"/><rect x="1" y="13" width="1" height="1" fill="#008080"/><rect x="2" y="13" width="3" height="1" fill="#fff"/><rect x="5" y="13" width="1" height="1" fill="#000"/><rect x="6" y="13" width="1" height="1" fill="#fff"/><rect x="7" y="13" width="1" height="1" fill="#000"/><rect x="8" y="13" width="7" height="1" fill="#c0c0c0"/><rect x="15" y="13" width="1" height="1" fill="#00f"/><rect x="16" y="13" width="1" height="1" fill="#000"/><rect x="1" y="14" width="1" height="1" fill="#008080"/><rect x="2" y="14" width="1" height="1" fill="#00f"/><rect x="3" y="14" width="1" height="1" fill="#fff"/><rect x="4" y="14" width="2" height="1" fill="#c0c0c0"/><rect x="6" y="14" width="1" height="1" fill="#000"/><rect x="7" y="14" width="7" height="1" fill="#c0c0c0"/><rect x="14" y="14" width="2" height="1" fill="#00f"/><rect x="16" y="14" width="1" height="1" fill="#000"/><rect x="1" y="15" width="1" height="1" fill="#008080"/><rect x="2" y="15" width="1" height="1" fill="#0ff"/><rect x="3" y="15" width="1" height="1" fill="#00f"/><rect x="4" y="15" width="9" height="1" fill="#c0c0c0"/><rect x="13" y="15" width="1" height="1" fill="#00f"/><rect x="14" y="15" width="1" height="1" fill="#0ff"/><rect x="15" y="15" width="1" height="1" fill="#00f"/><rect x="16" y="15" width="1" height="1" fill="#000"/><rect x="1" y="16" width="2" height="1" fill="#008080"/><rect x="3" y="16" width="2" height="1" fill="#00f"/><rect x="5" y="16" width="7" height="1" fill="#c0c0c0"/><rect x="12" y="16" width="4" height="1" fill="#00f"/><rect x="16" y="16" width="1" height="1" fill="#000"/><rect x="1" y="17" width="16" height="1" fill="#000"/></svg>
<svg class="a" style="left:96px;top:745px" width="18" height="18" shape-rendering="crispEdges"><rect x="12" y="2" width="4" height="1" fill="#00f"/><rect x="7" y="3" width="7" height="1" fill="#00f"/><rect x="16" y="3" width="1" height="1" fill="#00f"/><rect x="5" y="4" width="2" height="1" fill="#00f"/><rect x="7" y="4" width="1" height="1" fill="#ff0"/><rect x="8" y="4" width="7" height="1" fill="#00f"/><rect x="16" y="4" width="1" height="1" fill="#00f"/><rect x="4" y="5" width="2" height="1" fill="#00f"/><rect x="6" y="5" width="1" height="1" fill="#ff0"/><rect x="7" y="5" width="10" height="1" fill="#00f"/><rect x="3" y="6" width="2" height="1" fill="#00f"/><rect x="5" y="6" width="1" height="1" fill="#ff0"/><rect x="6" y="6" width="2" height="1" fill="#00f"/><rect x="8" y="6" width="1" height="1" fill="#000"/><rect x="9" y="6" width="3" height="1" fill="#c0c0c0"/><rect x="12" y="6" width="1" height="1" fill="#000"/><rect x="13" y="6" width="4" height="1" fill="#00f"/><rect x="2" y="7" width="1" height="1" fill="#00f"/><rect x="3" y="7" width="2" height="1" fill="#ff0"/><rect x="5" y="7" width="2" height="1" fill="#00f"/><rect x="7" y="7" width="1" height="1" fill="#000"/><rect x="8" y="7" width="4" height="1" fill="#c0c0c0"/><rect x="12" y="7" width="1" height="1" fill="#000"/><rect x="13" y="7" width="4" height="1" fill="#00f"/><rect x="2" y="8" width="1" height="1" fill="#ff0"/><rect x="3" y="8" width="14" height="1" fill="#00f"/><rect x="1" y="9" width="1" height="1" fill="#808000"/><rect x="2" y="9" width="1" height="1" fill="#ff0"/><rect x="3" y="9" width="14" height="1" fill="#00f"/><rect x="1" y="10" width="1" height="1" fill="#808000"/><rect x="2" y="10" width="15" height="1" fill="#00f"/><rect x="1" y="11" width="1" height="1" fill="#808000"/><rect x="2" y="11" width="6" height="1" fill="#00f"/><rect x="8" y="11" width="4" height="1" fill="#c0c0c0"/><rect x="12" y="11" width="1" height="1" fill="#000"/><rect x="13" y="11" width="4" height="1" fill="#00f"/><rect x="1" y="12" width="1" height="1" fill="#808000"/><rect x="2" y="12" width="6" height="1" fill="#00f"/><rect x="8" y="12" width="5" height="1" fill="#c0c0c0"/><rect x="13" y="12" width="1" height="1" fill="#000"/><rect x="14" y="12" width="2" height="1" fill="#00f"/><rect x="1" y="13" width="1" height="1" fill="#808000"/><rect x="2" y="13" width="1" height="1" fill="#00f"/><rect x="3" y="13" width="1" height="1" fill="#c0c0c0"/><rect x="4" y="13" width="1" height="1" fill="#000"/><rect x="5" y="13" width="11" height="1" fill="#00f"/><rect x="1" y="14" width="1" height="1" fill="#808000"/><rect x="2" y="14" width="1" height="1" fill="#00f"/><rect x="3" y="14" width="1" height="1" fill="#c0c0c0"/><rect x="4" y="14" width="1" height="1" fill="#000"/><rect x="5" y="14" width="10" height="1" fill="#00f"/><rect x="15" y="14" width="1" height="1" fill="#000"/><rect x="2" y="15" width="1" height="1" fill="#00f"/><rect x="3" y="15" width="2" height="1" fill="#c0c0c0"/><rect x="5" y="15" width="2" height="1" fill="#000"/><rect x="7" y="15" width="6" height="1" fill="#00f"/><rect x="13" y="15" width="2" height="1" fill="#000"/><rect x="3" y="16" width="4" height="1" fill="#00f"/><rect x="7" y="16" width="6" height="1" fill="#000"/><rect x="4" y="17" width="2" height="1" fill="#00f"/></svg>
<svg class="a" style="left:118px;top:745px" width="18" height="18" shape-rendering="crispEdges"><rect x="4" y="2" width="2" height="1" fill="#000"/><rect x="7" y="2" width="1" height="1" fill="#000"/><rect x="10" y="2" width="3" height="1" fill="#000"/><rect x="14" y="2" width="2" height="1" fill="#000"/><rect x="4" y="3" width="2" height="1" fill="#000"/><rect x="6" y="3" width="1" height="1" fill="#fff"/><rect x="7" y="3" width="2" height="1" fill="#000"/><rect x="10" y="3" width="1" height="1" fill="#000"/><rect x="11" y="3" width="1" height="1" fill="#fff"/><rect x="12" y="3" width="2" height="1" fill="#000"/><rect x="14" y="3" width="1" height="1" fill="#fff"/><rect x="15" y="3" width="2" height="1" fill="#000"/><rect x="4" y="4" width="1" height="1" fill="#000"/><rect x="5" y="4" width="1" height="1" fill="#fff"/><rect x="6" y="4" width="1" height="1" fill="#000"/><rect x="7" y="4" width="1" height="1" fill="#fff"/><rect x="8" y="4" width="1" height="1" fill="#000"/><rect x="10" y="4" width="3" height="1" fill="#000"/><rect x="13" y="4" width="1" height="1" fill="#fff"/><rect x="14" y="4" width="1" height="1" fill="#000"/><rect x="15" y="4" width="1" height="1" fill="#fff"/><rect x="16" y="4" width="1" height="1" fill="#000"/><rect x="4" y="5" width="5" height="1" fill="#000"/><rect x="10" y="5" width="1" height="1" fill="#000"/><rect x="11" y="5" width="1" height="1" fill="#fff"/><rect x="12" y="5" width="5" height="1" fill="#000"/><rect x="4" y="6" width="2" height="1" fill="#000"/><rect x="7" y="6" width="2" height="1" fill="#000"/><rect x="10" y="6" width="2" height="1" fill="#000"/><rect x="13" y="6" width="3" height="1" fill="#000"/><rect x="4" y="7" width="2" height="1" fill="#000"/><rect x="7" y="7" width="2" height="1" fill="#000"/><rect x="10" y="7" width="6" height="1" fill="#000"/><rect x="2" y="8" width="1" height="1" fill="#000"/><rect x="3" y="8" width="5" height="1" fill="#f00"/><rect x="8" y="8" width="1" height="1" fill="#000"/><rect x="9" y="8" width="3" height="1" fill="#f0f"/><rect x="12" y="8" width="1" height="1" fill="#000"/><rect x="13" y="8" width="3" height="1" fill="#ff0"/><rect x="16" y="8" width="1" height="1" fill="#000"/><rect x="2" y="9" width="5" height="1" fill="#f00"/><rect x="7" y="9" width="1" height="1" fill="#000"/><rect x="8" y="9" width="3" height="1" fill="#f0f"/><rect x="11" y="9" width="1" height="1" fill="#000"/><rect x="12" y="9" width="5" height="1" fill="#ff0"/><rect x="17" y="9" width="1" height="1" fill="#000"/><rect x="2" y="10" width="2" height="1" fill="#f00"/><rect x="4" y="10" width="2" height="1" fill="#000"/><rect x="6" y="10" width="2" height="1" fill="#f0f"/><rect x="8" y="10" width="2" height="1" fill="#f00"/><rect x="10" y="10" width="1" height="1" fill="#000"/><rect x="11" y="10" width="2" height="1" fill="#ff0"/><rect x="13" y="10" width="2" height="1" fill="#00f"/><rect x="15" y="10" width="2" height="1" fill="#ff0"/><rect x="17" y="10" width="1" height="1" fill="#000"/><rect x="2" y="11" width="2" height="1" fill="#f00"/><rect x="4" y="11" width="1" height="1" fill="#000"/><rect x="5" y="11" width="1" height="1" fill="#fff"/><rect x="6" y="11" width="1" height="1" fill="#f0f"/><rect x="7" y="11" width="1" height="1" fill="#000"/><rect x="8" y="11" width="2" height="1" fill="#f00"/><rect x="10" y="11" width="1" height="1" fill="#000"/><rect x="11" y="11" width="2" height="1" fill="#ff0"/><rect x="13" y="11" width="2" height="1" fill="#00f"/><rect x="15" y="11" width="3" height="1" fill="#000"/><rect x="2" y="12" width="2" height="1" fill="#f00"/><rect x="4" y="12" width="1" height="1" fill="#000"/><rect x="5" y="12" width="1" height="1" fill="#fff"/><rect x="6" y="12" width="1" height="1" fill="#f0f"/><rect x="7" y="12" width="1" height="1" fill="#000"/><rect x="8" y="12" width="2" height="1" fill="#f00"/><rect x="10" y="12" width="1" height="1" fill="#000"/><rect x="11" y="12" width="2" height="1" fill="#ff0"/><rect x="13" y="12" width="2" height="1" fill="#00f"/><rect x="15" y="12" width="2" height="1" fill="#ff0"/><rect x="17" y="12" width="1" height="1" fill="#000"/><rect x="2" y="13" width="2" height="1" fill="#f00"/><rect x="4" y="13" width="2" height="1" fill="#000"/><rect x="6" y="13" width="1" height="1" fill="#f0f"/><rect x="7" y="13" width="1" height="1" fill="#000"/><rect x="8" y="13" width="2" height="1" fill="#f00"/><rect x="10" y="13" width="1" height="1" fill="#000"/><rect x="11" y="13" width="2" height="1" fill="#ff0"/><rect x="13" y="13" width="2" height="1" fill="#00f"/><rect x="15" y="13" width="2" height="1" fill="#ff0"/><rect x="17" y="13" width="1" height="1" fill="#000"/><rect x="2" y="14" width="3" height="1" fill="#f00"/><rect x="5" y="14" width="2" height="1" fill="#000"/><rect x="7" y="14" width="2" height="1" fill="#f00"/><rect x="9" y="14" width="2" height="1" fill="#000"/><rect x="11" y="14" width="6" height="1" fill="#ff0"/><rect x="17" y="14" width="1" height="1" fill="#000"/><rect x="2" y="15" width="6" height="1" fill="#f00"/><rect x="8" y="15" width="2" height="1" fill="#f0f"/><rect x="10" y="15" width="1" height="1" fill="#000"/><rect x="11" y="15" width="5" height="1" fill="#ff0"/><rect x="16" y="15" width="1" height="1" fill="#000"/><rect x="2" y="16" width="5" height="1" fill="#f00"/><rect x="7" y="16" width="3" height="1" fill="#f0f"/><rect x="10" y="16" width="2" height="1" fill="#000"/><rect x="12" y="16" width="3" height="1" fill="#ff0"/><rect x="15" y="16" width="1" height="1" fill="#000"/><rect x="2" y="17" width="14" height="1" fill="#000"/></svg>
<svg class="a" style="left:141px;top:745px" width="18" height="18" shape-rendering="crispEdges"><rect x="4" y="3" width="5" height="1" fill="#808080"/><rect x="3" y="4" width="1" height="1" fill="#808080"/><rect x="4" y="4" width="2" height="1" fill="#ff0"/><rect x="6" y="4" width="1" height="1" fill="#fff"/><rect x="7" y="4" width="2" height="1" fill="#ff0"/><rect x="9" y="4" width="1" height="1" fill="#808080"/><rect x="2" y="5" width="1" height="1" fill="#808080"/><rect x="3" y="5" width="1" height="1" fill="#ff0"/><rect x="4" y="5" width="1" height="1" fill="#fff"/><rect x="5" y="5" width="2" height="1" fill="#ff0"/><rect x="7" y="5" width="1" height="1" fill="#fff"/><rect x="8" y="5" width="2" height="1" fill="#ff0"/><rect x="10" y="5" width="6" height="1" fill="#808080"/><rect x="2" y="6" width="1" height="1" fill="#808080"/><rect x="3" y="6" width="2" height="1" fill="#fff"/><rect x="5" y="6" width="4" height="1" fill="#000"/><rect x="9" y="6" width="3" height="1" fill="#fff"/><rect x="12" y="6" width="2" height="1" fill="#ff0"/><rect x="14" y="6" width="1" height="1" fill="#fff"/><rect x="15" y="6" width="1" height="1" fill="#808080"/><rect x="16" y="6" width="1" height="1" fill="#000"/><rect x="2" y="7" width="1" height="1" fill="#808080"/><rect x="3" y="7" width="1" height="1" fill="#fff"/><rect x="4" y="7" width="1" height="1" fill="#000"/><rect x="5" y="7" width="1" height="1" fill="#0ff"/><rect x="6" y="7" width="1" height="1" fill="#fff"/><rect x="7" y="7" width="2" height="1" fill="#0ff"/><rect x="9" y="7" width="1" height="1" fill="#000"/><rect x="10" y="7" width="1" height="1" fill="#fff"/><rect x="11" y="7" width="2" height="1" fill="#ff0"/><rect x="13" y="7" width="1" height="1" fill="#fff"/><rect x="14" y="7" width="2" height="1" fill="#ff0"/><rect x="16" y="7" width="1" height="1" fill="#000"/><rect x="2" y="8" width="1" height="1" fill="#808080"/><rect x="3" y="8" width="1" height="1" fill="#000"/><rect x="4" y="8" width="3" height="1" fill="#0ff"/><rect x="7" y="8" width="1" height="1" fill="#fff"/><rect x="8" y="8" width="1" height="1" fill="#0ff"/><rect x="9" y="8" width="2" height="1" fill="#000"/><rect x="11" y="8" width="1" height="1" fill="#ff0"/><rect x="12" y="8" width="1" height="1" fill="#fff"/><rect x="13" y="8" width="2" height="1" fill="#ff0"/><rect x="15" y="8" width="1" height="1" fill="#fff"/><rect x="16" y="8" width="1" height="1" fill="#000"/><rect x="2" y="9" width="1" height="1" fill="#808080"/><rect x="3" y="9" width="1" height="1" fill="#000"/><rect x="4" y="9" width="1" height="1" fill="#0ff"/><rect x="5" y="9" width="1" height="1" fill="#fff"/><rect x="6" y="9" width="3" height="1" fill="#0ff"/><rect x="9" y="9" width="2" height="1" fill="#000"/><rect x="11" y="9" width="2" height="1" fill="#ff0"/><rect x="13" y="9" width="1" height="1" fill="#fff"/><rect x="14" y="9" width="2" height="1" fill="#ff0"/><rect x="16" y="9" width="1" height="1" fill="#000"/><rect x="2" y="10" width="1" height="1" fill="#808080"/><rect x="3" y="10" width="1" height="1" fill="#000"/><rect x="4" y="10" width="3" height="1" fill="#0ff"/><rect x="7" y="10" width="1" height="1" fill="#fff"/><rect x="8" y="10" width="1" height="1" fill="#0ff"/><rect x="9" y="10" width="2" height="1" fill="#000"/><rect x="11" y="10" width="1" height="1" fill="#fff"/><rect x="12" y="10" width="2" height="1" fill="#ff0"/><rect x="14" y="10" width="1" height="1" fill="#fff"/><rect x="15" y="10" width="1" height="1" fill="#ff0"/><rect x="16" y="10" width="1" height="1" fill="#000"/><rect x="2" y="11" width="1" height="1" fill="#808080"/><rect x="3" y="11" width="1" height="1" fill="#ff0"/><rect x="4" y="11" width="1" height="1" fill="#000"/><rect x="5" y="11" width="4" height="1" fill="#0ff"/><rect x="9" y="11" width="1" height="1" fill="#000"/><rect x="10" y="11" width="1" height="1" fill="#00f"/><rect x="11" y="11" width="1" height="1" fill="#fff"/><rect x="12" y="11" width="2" height="1" fill="#ff0"/><rect x="14" y="11" width="1" height="1" fill="#fff"/><rect x="15" y="11" width="1" height="1" fill="#ff0"/><rect x="16" y="11" width="1" height="1" fill="#000"/><rect x="2" y="12" width="1" height="1" fill="#808080"/><rect x="3" y="12" width="1" height="1" fill="#ff0"/><rect x="4" y="12" width="1" height="1" fill="#fff"/><rect x="5" y="12" width="4" height="1" fill="#000"/><rect x="9" y="12" width="3" height="1" fill="#00f"/><rect x="12" y="12" width="1" height="1" fill="#ff0"/><rect x="13" y="12" width="1" height="1" fill="#fff"/><rect x="14" y="12" width="2" height="1" fill="#ff0"/><rect x="16" y="12" width="1" height="1" fill="#000"/><rect x="2" y="13" width="1" height="1" fill="#808080"/><rect x="3" y="13" width="2" height="1" fill="#ff0"/><rect x="5" y="13" width="1" height="1" fill="#fff"/><rect x="6" y="13" width="3" height="1" fill="#ff0"/><rect x="9" y="13" width="1" height="1" fill="#00f"/><rect x="10" y="13" width="1" height="1" fill="#0ff"/><rect x="11" y="13" width="2" height="1" fill="#00f"/><rect x="13" y="13" width="1" height="1" fill="#fff"/><rect x="14" y="13" width="2" height="1" fill="#ff0"/><rect x="16" y="13" width="1" height="1" fill="#000"/><rect x="2" y="14" width="8" height="1" fill="#808080"/><rect x="10" y="14" width="1" height="1" fill="#00f"/><rect x="11" y="14" width="1" height="1" fill="#0ff"/><rect x="12" y="14" width="1" height="1" fill="#00f"/><rect x="13" y="14" width="3" height="1" fill="#808080"/><rect x="16" y="14" width="1" height="1" fill="#000"/><rect x="3" y="15" width="8" height="1" fill="#000"/><rect x="11" y="15" width="1" height="1" fill="#00f"/><rect x="12" y="15" width="1" height="1" fill="#0ff"/><rect x="13" y="15" width="1" height="1" fill="#00f"/><rect x="14" y="15" width="3" height="1" fill="#000"/><rect x="11" y="16" width="2" height="1" fill="#00f"/><rect x="13" y="16" width="1" height="1" fill="#000"/><rect x="12" y="17" width="2" height="1" fill="#000"/></svg>
<svg class="a" style="left:164px;top:745px" width="18" height="18" shape-rendering="crispEdges"><rect x="10" y="2" width="1" height="1" fill="#000"/><rect x="15" y="2" width="1" height="1" fill="#000"/><rect x="16" y="2" width="1" height="1" fill="#f00"/><rect x="9" y="3" width="1" height="1" fill="#000"/><rect x="10" y="3" width="1" height="1" fill="#fff"/><rect x="11" y="3" width="1" height="1" fill="#000"/><rect x="14" y="3" width="3" height="1" fill="#ff0"/><rect x="8" y="4" width="1" height="1" fill="#000"/><rect x="9" y="4" width="3" height="1" fill="#fff"/><rect x="12" y="4" width="1" height="1" fill="#000"/><rect x="13" y="4" width="3" height="1" fill="#ff0"/><rect x="7" y="5" width="1" height="1" fill="#000"/><rect x="8" y="5" width="2" height="1" fill="#fff"/><rect x="10" y="5" width="1" height="1" fill="#ff0"/><rect x="11" y="5" width="1" height="1" fill="#fff"/><rect x="12" y="5" width="3" height="1" fill="#ff0"/><rect x="6" y="6" width="1" height="1" fill="#000"/><rect x="7" y="6" width="2" height="1" fill="#fff"/><rect x="9" y="6" width="5" height="1" fill="#ff0"/><rect x="14" y="6" width="1" height="1" fill="#000"/><rect x="5" y="7" width="1" height="1" fill="#000"/><rect x="6" y="7" width="4" height="1" fill="#fff"/><rect x="10" y="7" width="3" height="1" fill="#ff0"/><rect x="13" y="7" width="2" height="1" fill="#fff"/><rect x="15" y="7" width="1" height="1" fill="#000"/><rect x="4" y="8" width="1" height="1" fill="#000"/><rect x="5" y="8" width="1" height="1" fill="#fff"/><rect x="6" y="8" width="2" height="1" fill="#ff0"/><rect x="8" y="8" width="1" height="1" fill="#fff"/><rect x="9" y="8" width="3" height="1" fill="#ff0"/><rect x="12" y="8" width="1" height="1" fill="#000"/><rect x="13" y="8" width="1" height="1" fill="#fff"/><rect x="14" y="8" width="1" height="1" fill="#f00"/><rect x="15" y="8" width="1" height="1" fill="#fff"/><rect x="16" y="8" width="1" height="1" fill="#000"/><rect x="3" y="9" width="1" height="1" fill="#000"/><rect x="4" y="9" width="2" height="1" fill="#fff"/><rect x="6" y="9" width="5" height="1" fill="#ff0"/><rect x="11" y="9" width="2" height="1" fill="#fff"/><rect x="13" y="9" width="1" height="1" fill="#ff0"/><rect x="14" y="9" width="3" height="1" fill="#fff"/><rect x="17" y="9" width="1" height="1" fill="#000"/><rect x="4" y="10" width="2" height="1" fill="#fff"/><rect x="6" y="10" width="4" height="1" fill="#ff0"/><rect x="10" y="10" width="1" height="1" fill="#000"/><rect x="11" y="10" width="1" height="1" fill="#fff"/><rect x="12" y="10" width="1" height="1" fill="#ff0"/><rect x="13" y="10" width="4" height="1" fill="#fff"/><rect x="5" y="11" width="1" height="1" fill="#fff"/><rect x="6" y="11" width="3" height="1" fill="#ff0"/><rect x="9" y="11" width="7" height="1" fill="#fff"/><rect x="5" y="12" width="3" height="1" fill="#ff0"/><rect x="8" y="12" width="1" height="1" fill="#000"/><rect x="9" y="12" width="6" height="1" fill="#fff"/><rect x="4" y="13" width="3" height="1" fill="#ff0"/><rect x="7" y="13" width="7" height="1" fill="#fff"/><rect x="3" y="14" width="3" height="1" fill="#ff0"/><rect x="6" y="14" width="1" height="1" fill="#000"/><rect x="8" y="14" width="5" height="1" fill="#fff"/><rect x="3" y="15" width="1" height="1" fill="#f00"/><rect x="4" y="15" width="1" height="1" fill="#ff0"/><rect x="9" y="15" width="3" height="1" fill="#fff"/><rect x="2" y="16" width="2" height="1" fill="#000"/><rect x="10" y="16" width="1" height="1" fill="#fff"/></svg>
<svg class="a" style="left:187px;top:745px" width="18" height="16" shape-rendering="crispEdges"><rect x="7" y="3" width="1" height="1" fill="#008080"/><rect x="8" y="3" width="6" height="1" fill="#00f"/><rect x="14" y="3" width="1" height="1" fill="#f0f"/><rect x="4" y="4" width="1" height="1" fill="#008080"/><rect x="5" y="4" width="11" height="1" fill="#00f"/><rect x="16" y="4" width="1" height="1" fill="#f0f"/><rect x="2" y="5" width="1" height="1" fill="#008080"/><rect x="3" y="5" width="3" height="1" fill="#00f"/><rect x="6" y="5" width="1" height="1" fill="#008080"/><rect x="7" y="5" width="3" height="1" fill="#00f"/><rect x="10" y="5" width="1" height="1" fill="#fff"/><rect x="11" y="5" width="6" height="1" fill="#00f"/><rect x="17" y="5" width="1" height="1" fill="#008080"/><rect x="2" y="6" width="3" height="1" fill="#00f"/><rect x="5" y="6" width="1" height="1" fill="#fff"/><rect x="6" y="6" width="4" height="1" fill="#00f"/><rect x="10" y="6" width="2" height="1" fill="#fff"/><rect x="12" y="6" width="6" height="1" fill="#00f"/><rect x="2" y="7" width="2" height="1" fill="#00f"/><rect x="4" y="7" width="1" height="1" fill="#fff"/><rect x="5" y="7" width="5" height="1" fill="#00f"/><rect x="10" y="7" width="3" height="1" fill="#fff"/><rect x="13" y="7" width="5" height="1" fill="#00f"/><rect x="2" y="8" width="8" height="1" fill="#00f"/><rect x="10" y="8" width="3" height="1" fill="#fff"/><rect x="13" y="8" width="1" height="1" fill="#000"/><rect x="14" y="8" width="4" height="1" fill="#00f"/><rect x="2" y="9" width="8" height="1" fill="#00f"/><rect x="10" y="9" width="2" height="1" fill="#fff"/><rect x="12" y="9" width="1" height="1" fill="#000"/><rect x="13" y="9" width="5" height="1" fill="#00f"/><rect x="3" y="10" width="1" height="1" fill="#008080"/><rect x="4" y="10" width="6" height="1" fill="#00f"/><rect x="10" y="10" width="1" height="1" fill="#fff"/><rect x="11" y="10" width="1" height="1" fill="#000"/><rect x="12" y="10" width="5" height="1" fill="#00f"/><rect x="4" y="11" width="1" height="1" fill="#008080"/><rect x="5" y="11" width="2" height="1" fill="#f0f"/><rect x="7" y="11" width="3" height="1" fill="#00f"/><rect x="10" y="11" width="1" height="1" fill="#000"/><rect x="11" y="11" width="5" height="1" fill="#00f"/><rect x="10" y="12" width="4" height="1" fill="#00f"/><rect x="10" y="13" width="3" height="1" fill="#00f"/><rect x="10" y="14" width="2" height="1" fill="#00f"/><rect x="10" y="15" width="1" height="1" fill="#00f"/></svg>
<svg class="a" style="left:236px;top:747px" width="16" height="16" shape-rendering="crispEdges"><rect x="0" y="0" width="16" height="1" fill="#00f"/><rect x="0" y="1" width="2" height="1" fill="#00f"/><rect x="2" y="1" width="3" height="1" fill="#0f0"/><rect x="5" y="1" width="11" height="1" fill="#00f"/><rect x="0" y="2" width="1" height="1" fill="#00f"/><rect x="1" y="2" width="5" height="1" fill="#0f0"/><rect x="6" y="2" width="2" height="1" fill="#00f"/><rect x="8" y="2" width="6" height="1" fill="#0f0"/><rect x="14" y="2" width="2" height="1" fill="#00f"/><rect x="0" y="3" width="1" height="1" fill="#00f"/><rect x="1" y="3" width="5" height="1" fill="#0f0"/><rect x="6" y="3" width="2" height="1" fill="#00f"/><rect x="8" y="3" width="6" height="1" fill="#0f0"/><rect x="14" y="3" width="2" height="1" fill="#00f"/><rect x="0" y="4" width="1" height="1" fill="#00f"/><rect x="1" y="4" width="5" height="1" fill="#0f0"/><rect x="6" y="4" width="2" height="1" fill="#00f"/><rect x="8" y="4" width="6" height="1" fill="#0f0"/><rect x="14" y="4" width="2" height="1" fill="#00f"/><rect x="0" y="5" width="2" height="1" fill="#00f"/><rect x="2" y="5" width="3" height="1" fill="#0f0"/><rect x="5" y="5" width="3" height="1" fill="#00f"/><rect x="8" y="5" width="6" height="1" fill="#0f0"/><rect x="14" y="5" width="2" height="1" fill="#00f"/><rect x="0" y="6" width="8" height="1" fill="#00f"/><rect x="8" y="6" width="6" height="1" fill="#0f0"/><rect x="14" y="6" width="2" height="1" fill="#00f"/><rect x="0" y="7" width="16" height="1" fill="#00f"/><rect x="0" y="8" width="4" height="1" fill="#00f"/><rect x="4" y="8" width="1" height="1" fill="#0f0"/><rect x="5" y="8" width="6" height="1" fill="#00f"/><rect x="11" y="8" width="1" height="1" fill="#0f0"/><rect x="12" y="8" width="4" height="1" fill="#00f"/><rect x="0" y="9" width="3" height="1" fill="#00f"/><rect x="3" y="9" width="3" height="1" fill="#0f0"/><rect x="6" y="9" width="4" height="1" fill="#00f"/><rect x="10" y="9" width="3" height="1" fill="#0f0"/><rect x="13" y="9" width="3" height="1" fill="#00f"/><rect x="0" y="10" width="2" height="1" fill="#00f"/><rect x="2" y="10" width="5" height="1" fill="#0f0"/><rect x="7" y="10" width="3" height="1" fill="#00f"/><rect x="10" y="10" width="3" height="1" fill="#0f0"/><rect x="13" y="10" width="3" height="1" fill="#00f"/><rect x="0" y="11" width="1" height="1" fill="#00f"/><rect x="1" y="11" width="7" height="1" fill="#0f0"/><rect x="8" y="11" width="1" height="1" fill="#00f"/><rect x="9" y="11" width="5" height="1" fill="#0f0"/><rect x="14" y="11" width="2" height="1" fill="#00f"/><rect x="0" y="12" width="2" height="1" fill="#00f"/><rect x="2" y="12" width="5" height="1" fill="#0f0"/><rect x="7" y="12" width="2" height="1" fill="#00f"/><rect x="9" y="12" width="5" height="1" fill="#0f0"/><rect x="14" y="12" width="2" height="1" fill="#00f"/><rect x="0" y="13" width="3" height="1" fill="#00f"/><rect x="3" y="13" width="3" height="1" fill="#0f0"/><rect x="6" y="13" width="2" height="1" fill="#00f"/><rect x="8" y="13" width="7" height="1" fill="#0f0"/><rect x="15" y="13" width="1" height="1" fill="#00f"/><rect x="0" y="14" width="4" height="1" fill="#00f"/><rect x="4" y="14" width="1" height="1" fill="#0f0"/><rect x="5" y="14" width="11" height="1" fill="#00f"/><rect x="0" y="15" width="16" height="1" fill="#00f"/></svg>
<svg class="a" style="left:399px;top:747px" width="17" height="16" shape-rendering="crispEdges"><rect x="2" y="0" width="5" height="1" fill="#808000"/><rect x="1" y="1" width="1" height="1" fill="#808000"/><rect x="2" y="1" width="1" height="1" fill="#ffff99"/><rect x="3" y="1" width="4" height="1" fill="#fff"/><rect x="7" y="1" width="1" height="1" fill="#808000"/><rect x="8" y="1" width="1" height="1" fill="#000"/><rect x="1" y="2" width="1" height="1" fill="#808000"/><rect x="2" y="2" width="6" height="1" fill="#ffff99"/><rect x="8" y="2" width="6" height="1" fill="#808000"/><rect x="1" y="3" width="1" height="1" fill="#808000"/><rect x="2" y="3" width="1" height="1" fill="#ffff99"/><rect x="3" y="3" width="1" height="1" fill="#ffd8a0"/><rect x="4" y="3" width="3" height="1" fill="#000"/><rect x="7" y="3" width="1" height="1" fill="#ffd8a0"/><rect x="8" y="3" width="1" height="1" fill="#ffff99"/><rect x="9" y="3" width="1" height="1" fill="#ffd8a0"/><rect x="10" y="3" width="1" height="1" fill="#ffff99"/><rect x="11" y="3" width="1" height="1" fill="#ffd8a0"/><rect x="12" y="3" width="1" height="1" fill="#ffff99"/><rect x="13" y="3" width="1" height="1" fill="#ffd8a0"/><rect x="14" y="3" width="1" height="1" fill="#808000"/><rect x="15" y="3" width="1" height="1" fill="#000"/><rect x="1" y="4" width="1" height="1" fill="#808000"/><rect x="2" y="4" width="1" height="1" fill="#ffff99"/><rect x="3" y="4" width="1" height="1" fill="#000"/><rect x="4" y="4" width="1" height="1" fill="#0ff"/><rect x="5" y="4" width="1" height="1" fill="#fff"/><rect x="6" y="4" width="1" height="1" fill="#0ff"/><rect x="7" y="4" width="1" height="1" fill="#000"/><rect x="8" y="4" width="1" height="1" fill="#ffff99"/><rect x="9" y="4" width="1" height="1" fill="#ffd8a0"/><rect x="10" y="4" width="1" height="1" fill="#ffff99"/><rect x="11" y="4" width="1" height="1" fill="#ffd8a0"/><rect x="12" y="4" width="1" height="1" fill="#ffff99"/><rect x="13" y="4" width="1" height="1" fill="#ffd8a0"/><rect x="14" y="4" width="1" height="1" fill="#808000"/><rect x="15" y="4" width="1" height="1" fill="#000"/><rect x="1" y="5" width="1" height="1" fill="#808000"/><rect x="2" y="5" width="1" height="1" fill="#000"/><rect x="3" y="5" width="1" height="1" fill="#0ff"/><rect x="4" y="5" width="1" height="1" fill="#fff"/><rect x="5" y="5" width="1" height="1" fill="#0ff"/><rect x="6" y="5" width="1" height="1" fill="#fff"/><rect x="7" y="5" width="1" height="1" fill="#0ff"/><rect x="8" y="5" width="1" height="1" fill="#000"/><rect x="9" y="5" width="1" height="1" fill="#ffd8a0"/><rect x="10" y="5" width="1" height="1" fill="#ffff99"/><rect x="11" y="5" width="1" height="1" fill="#ffd8a0"/><rect x="12" y="5" width="1" height="1" fill="#ffff99"/><rect x="13" y="5" width="1" height="1" fill="#ffd8a0"/><rect x="14" y="5" width="1" height="1" fill="#808000"/><rect x="15" y="5" width="1" height="1" fill="#000"/><rect x="1" y="6" width="1" height="1" fill="#808000"/><rect x="2" y="6" width="1" height="1" fill="#000"/><rect x="3" y="6" width="1" height="1" fill="#fff"/><rect x="4" y="6" width="1" height="1" fill="#0ff"/><rect x="5" y="6" width="1" height="1" fill="#fff"/><rect x="6" y="6" width="2" height="1" fill="#0ff"/><rect x="8" y="6" width="1" height="1" fill="#000"/><rect x="9" y="6" width="1" height="1" fill="#ffff99"/><rect x="10" y="6" width="1" height="1" fill="#ffd8a0"/><rect x="11" y="6" width="1" height="1" fill="#ffff99"/><rect x="12" y="6" width="1" height="1" fill="#ffd8a0"/><rect x="13" y="6" width="1" height="1" fill="#ffff99"/><rect x="14" y="6" width="1" height="1" fill="#808000"/><rect x="15" y="6" width="1" height="1" fill="#000"/><rect x="1" y="7" width="1" height="1" fill="#808000"/><rect x="2" y="7" width="1" height="1" fill="#000"/><rect x="3" y="7" width="1" height="1" fill="#0ff"/><rect x="4" y="7" width="1" height="1" fill="#fff"/><rect x="5" y="7" width="1" height="1" fill="#0ff"/><rect x="6" y="7" width="1" height="1" fill="#fff"/><rect x="7" y="7" width="1" height="1" fill="#0ff"/><rect x="8" y="7" width="1" height="1" fill="#000"/><rect x="9" y="7" width="1" height="1" fill="#ffd8a0"/><rect x="10" y="7" width="1" height="1" fill="#ffff99"/><rect x="11" y="7" width="1" height="1" fill="#ffd8a0"/><rect x="12" y="7" width="1" height="1" fill="#ffff99"/><rect x="13" y="7" width="1" height="1" fill="#ffd8a0"/><rect x="14" y="7" width="1" height="1" fill="#808000"/><rect x="15" y="7" width="1" height="1" fill="#000"/><rect x="1" y="8" width="1" height="1" fill="#808000"/><rect x="2" y="8" width="1" height="1" fill="#ffff99"/><rect x="3" y="8" width="1" height="1" fill="#000"/><rect x="4" y="8" width="1" height="1" fill="#0ff"/><rect x="5" y="8" width="1" height="1" fill="#fff"/><rect x="6" y="8" width="1" height="1" fill="#0ff"/><rect x="7" y="8" width="1" height="1" fill="#000"/><rect x="8" y="8" width="1" height="1" fill="#ffff99"/><rect x="9" y="8" width="1" height="1" fill="#ffd8a0"/><rect x="10" y="8" width="1" height="1" fill="#ffff99"/><rect x="11" y="8" width="1" height="1" fill="#ffd8a0"/><rect x="12" y="8" width="1" height="1" fill="#ffff99"/><rect x="13" y="8" width="1" height="1" fill="#ffd8a0"/><rect x="14" y="8" width="1" height="1" fill="#808000"/><rect x="15" y="8" width="1" height="1" fill="#000"/><rect x="1" y="9" width="1" height="1" fill="#808000"/><rect x="2" y="9" width="1" height="1" fill="#ffff99"/><rect x="3" y="9" width="1" height="1" fill="#ffd8a0"/><rect x="4" y="9" width="3" height="1" fill="#000"/><rect x="7" y="9" width="1" height="1" fill="#00f"/><rect x="8" y="9" width="1" height="1" fill="#ffd8a0"/><rect x="9" y="9" width="1" height="1" fill="#ffff99"/><rect x="10" y="9" width="1" height="1" fill="#ffd8a0"/><rect x="11" y="9" width="1" height="1" fill="#ffff99"/><rect x="12" y="9" width="1" height="1" fill="#ffd8a0"/><rect x="13" y="9" width="1" height="1" fill="#ffff99"/><rect x="14" y="9" width="1" height="1" fill="#808000"/><rect x="15" y="9" width="1" height="1" fill="#000"/><rect x="1" y="10" width="1" height="1" fill="#808000"/><rect x="2" y="10" width="1" height="1" fill="#ffff99"/><rect x="3" y="10" width="1" height="1" fill="#ffd8a0"/><rect x="4" y="10" width="1" height="1" fill="#ffff99"/><rect x="5" y="10" width="1" height="1" fill="#ffd8a0"/><rect x="6" y="10" width="1" height="1" fill="#ffff99"/><rect x="7" y="10" width="2" height="1" fill="#00f"/><rect x="9" y="10" width="1" height="1" fill="#ffd8a0"/><rect x="10" y="10" width="1" height="1" fill="#ffff99"/><rect x="11" y="10" width="1" height="1" fill="#ffd8a0"/><rect x="12" y="10" width="1" height="1" fill="#ffff99"/><rect x="13" y="10" width="1" height="1" fill="#ffd8a0"/><rect x="14" y="10" width="1" height="1" fill="#808000"/><rect x="15" y="10" width="1" height="1" fill="#000"/><rect x="1" y="11" width="1" height="1" fill="#808000"/><rect x="2" y="11" width="1" height="1" fill="#ffff99"/><rect x="3" y="11" width="1" height="1" fill="#ffd8a0"/><rect x="4" y="11" width="1" height="1" fill="#ffff99"/><rect x="5" y="11" width="1" height="1" fill="#ffd8a0"/><rect x="6" y="11" width="1" height="1" fill="#ffff99"/><rect x="7" y="11" width="1" height="1" fill="#ffd8a0"/><rect x="8" y="11" width="2" height="1" fill="#00f"/><rect x="10" y="11" width="1" height="1" fill="#ffff99"/><rect x="11" y="11" width="1" height="1" fill="#ffd8a0"/><rect x="12" y="11" width="1" height="1" fill="#ffff99"/><rect x="13" y="11" width="1" height="1" fill="#ffd8a0"/><rect x="14" y="11" width="1" height="1" fill="#808000"/><rect x="15" y="11" width="1" height="1" fill="#000"/><rect x="1" y="12" width="8" height="1" fill="#808000"/><rect x="9" y="12" width="1" height="1" fill="#000"/><rect x="10" y="12" width="2" height="1" fill="#00f"/><rect x="12" y="12" width="4" height="1" fill="#808000"/><rect x="16" y="12" width="1" height="1" fill="#000"/><rect x="2" y="13" width="8" height="1" fill="#000"/><rect x="10" y="13" width="1" height="1" fill="#00f"/><rect x="11" y="13" width="1" height="1" fill="#0ff"/><rect x="12" y="13" width="1" height="1" fill="#00f"/><rect x="13" y="13" width="3" height="1" fill="#000"/><rect x="11" y="14" width="2" height="1" fill="#00f"/><rect x="13" y="14" width="1" height="1" fill="#000"/><rect x="12" y="15" width="1" height="1" fill="#000"/></svg>
<svg class="a" style="left:561px;top:746px" width="18" height="17" shape-rendering="crispEdges"><rect x="4" y="1" width="8" height="1" fill="#808080"/><rect x="12" y="1" width="1" height="1" fill="#000"/><rect x="4" y="2" width="1" height="1" fill="#808080"/><rect x="5" y="2" width="7" height="1" fill="#fff"/><rect x="12" y="2" width="1" height="1" fill="#000"/><rect x="13" y="2" width="1" height="1" fill="#fff"/><rect x="14" y="2" width="1" height="1" fill="#000"/><rect x="1" y="3" width="10" height="1" fill="#00f"/><rect x="11" y="3" width="1" height="1" fill="#fff"/><rect x="12" y="3" width="1" height="1" fill="#000"/><rect x="13" y="3" width="2" height="1" fill="#fff"/><rect x="15" y="3" width="1" height="1" fill="#000"/><rect x="1" y="4" width="1" height="1" fill="#00f"/><rect x="2" y="4" width="8" height="1" fill="#fff"/><rect x="10" y="4" width="1" height="1" fill="#00f"/><rect x="11" y="4" width="1" height="1" fill="#fff"/><rect x="12" y="4" width="5" height="1" fill="#000"/><rect x="1" y="5" width="1" height="1" fill="#00f"/><rect x="2" y="5" width="8" height="1" fill="#000"/><rect x="10" y="5" width="1" height="1" fill="#00f"/><rect x="11" y="5" width="5" height="1" fill="#fff"/><rect x="16" y="5" width="1" height="1" fill="#000"/><rect x="1" y="6" width="1" height="1" fill="#00f"/><rect x="2" y="6" width="1" height="1" fill="#000"/><rect x="3" y="6" width="1" height="1" fill="#fff"/><rect x="4" y="6" width="3" height="1" fill="#000"/><rect x="7" y="6" width="1" height="1" fill="#fff"/><rect x="8" y="6" width="2" height="1" fill="#000"/><rect x="10" y="6" width="1" height="1" fill="#00f"/><rect x="11" y="6" width="2" height="1" fill="#808080"/><rect x="13" y="6" width="3" height="1" fill="#fff"/><rect x="16" y="6" width="1" height="1" fill="#000"/><rect x="1" y="7" width="1" height="1" fill="#00f"/><rect x="2" y="7" width="1" height="1" fill="#000"/><rect x="3" y="7" width="1" height="1" fill="#fff"/><rect x="4" y="7" width="3" height="1" fill="#000"/><rect x="7" y="7" width="1" height="1" fill="#fff"/><rect x="8" y="7" width="2" height="1" fill="#000"/><rect x="10" y="7" width="1" height="1" fill="#00f"/><rect x="11" y="7" width="5" height="1" fill="#fff"/><rect x="16" y="7" width="1" height="1" fill="#000"/><rect x="1" y="8" width="1" height="1" fill="#00f"/><rect x="2" y="8" width="2" height="1" fill="#000"/><rect x="4" y="8" width="1" height="1" fill="#fff"/><rect x="5" y="8" width="1" height="1" fill="#000"/><rect x="6" y="8" width="1" height="1" fill="#fff"/><rect x="7" y="8" width="3" height="1" fill="#000"/><rect x="10" y="8" width="1" height="1" fill="#00f"/><rect x="11" y="8" width="2" height="1" fill="#808080"/><rect x="13" y="8" width="3" height="1" fill="#fff"/><rect x="16" y="8" width="1" height="1" fill="#000"/><rect x="1" y="9" width="1" height="1" fill="#00f"/><rect x="2" y="9" width="2" height="1" fill="#000"/><rect x="4" y="9" width="1" height="1" fill="#fff"/><rect x="5" y="9" width="1" height="1" fill="#000"/><rect x="6" y="9" width="1" height="1" fill="#fff"/><rect x="7" y="9" width="3" height="1" fill="#000"/><rect x="10" y="9" width="1" height="1" fill="#00f"/><rect x="11" y="9" width="5" height="1" fill="#fff"/><rect x="16" y="9" width="1" height="1" fill="#000"/><rect x="1" y="10" width="1" height="1" fill="#00f"/><rect x="2" y="10" width="8" height="1" fill="#000"/><rect x="10" y="10" width="1" height="1" fill="#00f"/><rect x="11" y="10" width="2" height="1" fill="#808080"/><rect x="13" y="10" width="3" height="1" fill="#fff"/><rect x="16" y="10" width="1" height="1" fill="#000"/><rect x="1" y="11" width="10" height="1" fill="#00f"/><rect x="11" y="11" width="5" height="1" fill="#fff"/><rect x="16" y="11" width="1" height="1" fill="#000"/><rect x="4" y="12" width="1" height="1" fill="#808080"/><rect x="5" y="12" width="11" height="1" fill="#fff"/><rect x="16" y="12" width="1" height="1" fill="#000"/><rect x="4" y="13" width="1" height="1" fill="#808080"/><rect x="5" y="13" width="11" height="1" fill="#fff"/><rect x="16" y="13" width="1" height="1" fill="#000"/><rect x="4" y="14" width="1" height="1" fill="#808080"/><rect x="5" y="14" width="11" height="1" fill="#fff"/><rect x="16" y="14" width="1" height="1" fill="#000"/><rect x="4" y="15" width="1" height="1" fill="#808080"/><rect x="5" y="15" width="11" height="1" fill="#fff"/><rect x="16" y="15" width="1" height="1" fill="#000"/><rect x="4" y="16" width="13" height="1" fill="#000"/></svg>
<svg class="a" style="left:944px;top:745px" width="18" height="17" shape-rendering="crispEdges"><rect x="9" y="2" width="2" height="1" fill="#000"/><rect x="8" y="3" width="1" height="1" fill="#ff0"/><rect x="9" y="3" width="2" height="1" fill="#000"/><rect x="7" y="4" width="2" height="1" fill="#ff0"/><rect x="9" y="4" width="1" height="1" fill="#000"/><rect x="10" y="4" width="2" height="1" fill="#fff"/><rect x="12" y="4" width="1" height="1" fill="#808080"/><rect x="15" y="4" width="1" height="1" fill="#808080"/><rect x="6" y="5" width="3" height="1" fill="#ff0"/><rect x="9" y="5" width="1" height="1" fill="#000"/><rect x="10" y="5" width="2" height="1" fill="#fff"/><rect x="12" y="5" width="1" height="1" fill="#808080"/><rect x="14" y="5" width="1" height="1" fill="#808080"/><rect x="3" y="6" width="3" height="1" fill="#ff0"/><rect x="6" y="6" width="1" height="1" fill="#fff"/><rect x="7" y="6" width="2" height="1" fill="#ff0"/><rect x="9" y="6" width="1" height="1" fill="#000"/><rect x="10" y="6" width="2" height="1" fill="#fff"/><rect x="12" y="6" width="1" height="1" fill="#808080"/><rect x="2" y="7" width="1" height="1" fill="#ff0"/><rect x="3" y="7" width="1" height="1" fill="#fff"/><rect x="4" y="7" width="2" height="1" fill="#ff0"/><rect x="6" y="7" width="1" height="1" fill="#fff"/><rect x="7" y="7" width="1" height="1" fill="#ff0"/><rect x="8" y="7" width="2" height="1" fill="#000"/><rect x="10" y="7" width="2" height="1" fill="#fff"/><rect x="12" y="7" width="1" height="1" fill="#808080"/><rect x="2" y="8" width="1" height="1" fill="#ff0"/><rect x="3" y="8" width="2" height="1" fill="#fff"/><rect x="5" y="8" width="1" height="1" fill="#ff0"/><rect x="6" y="8" width="1" height="1" fill="#fff"/><rect x="7" y="8" width="1" height="1" fill="#ff0"/><rect x="8" y="8" width="1" height="1" fill="#000"/><rect x="9" y="8" width="1" height="1" fill="#fff"/><rect x="10" y="8" width="1" height="1" fill="#000"/><rect x="11" y="8" width="1" height="1" fill="#fff"/><rect x="12" y="8" width="1" height="1" fill="#808080"/><rect x="14" y="8" width="4" height="1" fill="#808080"/><rect x="2" y="9" width="1" height="1" fill="#ff0"/><rect x="3" y="9" width="1" height="1" fill="#fff"/><rect x="4" y="9" width="2" height="1" fill="#ff0"/><rect x="6" y="9" width="1" height="1" fill="#fff"/><rect x="7" y="9" width="1" height="1" fill="#ff0"/><rect x="8" y="9" width="1" height="1" fill="#000"/><rect x="9" y="9" width="1" height="1" fill="#fff"/><rect x="10" y="9" width="1" height="1" fill="#000"/><rect x="11" y="9" width="1" height="1" fill="#fff"/><rect x="12" y="9" width="1" height="1" fill="#808080"/><rect x="2" y="10" width="1" height="1" fill="#ff0"/><rect x="3" y="10" width="2" height="1" fill="#fff"/><rect x="5" y="10" width="1" height="1" fill="#ff0"/><rect x="6" y="10" width="1" height="1" fill="#fff"/><rect x="7" y="10" width="1" height="1" fill="#ff0"/><rect x="8" y="10" width="2" height="1" fill="#000"/><rect x="10" y="10" width="2" height="1" fill="#fff"/><rect x="12" y="10" width="1" height="1" fill="#808080"/><rect x="2" y="11" width="2" height="1" fill="#000"/><rect x="4" y="11" width="2" height="1" fill="#ff0"/><rect x="6" y="11" width="1" height="1" fill="#fff"/><rect x="7" y="11" width="1" height="1" fill="#ff0"/><rect x="8" y="11" width="1" height="1" fill="#000"/><rect x="9" y="11" width="3" height="1" fill="#fff"/><rect x="12" y="11" width="1" height="1" fill="#808080"/><rect x="3" y="12" width="2" height="1" fill="#000"/><rect x="5" y="12" width="3" height="1" fill="#ff0"/><rect x="8" y="12" width="1" height="1" fill="#000"/><rect x="9" y="12" width="3" height="1" fill="#fff"/><rect x="12" y="12" width="1" height="1" fill="#808080"/><rect x="14" y="12" width="1" height="1" fill="#808080"/><rect x="5" y="13" width="1" height="1" fill="#000"/><rect x="6" y="13" width="2" height="1" fill="#ff0"/><rect x="8" y="13" width="1" height="1" fill="#000"/><rect x="9" y="13" width="3" height="1" fill="#fff"/><rect x="12" y="13" width="1" height="1" fill="#808080"/><rect x="15" y="13" width="1" height="1" fill="#808080"/><rect x="6" y="14" width="1" height="1" fill="#000"/><rect x="7" y="14" width="2" height="1" fill="#ff0"/><rect x="9" y="14" width="1" height="1" fill="#000"/><rect x="10" y="14" width="2" height="1" fill="#fff"/><rect x="12" y="14" width="1" height="1" fill="#808080"/><rect x="7" y="15" width="1" height="1" fill="#000"/><rect x="8" y="15" width="1" height="1" fill="#ff0"/><rect x="9" y="15" width="2" height="1" fill="#000"/><rect x="8" y="16" width="2" height="1" fill="#000"/></svg>
<svg class="a" style="left:961px;top:745px" width="20" height="18" shape-rendering="crispEdges"><rect x="11" y="2" width="3" height="1" fill="#808080"/><rect x="10" y="3" width="1" height="1" fill="#808080"/><rect x="11" y="3" width="3" height="1" fill="#fff"/><rect x="14" y="3" width="1" height="1" fill="#808080"/><rect x="9" y="4" width="1" height="1" fill="#808080"/><rect x="10" y="4" width="5" height="1" fill="#fff"/><rect x="15" y="4" width="2" height="1" fill="#000"/><rect x="7" y="5" width="3" height="1" fill="#808080"/><rect x="10" y="5" width="4" height="1" fill="#fff"/><rect x="14" y="5" width="1" height="1" fill="#000"/><rect x="5" y="6" width="2" height="1" fill="#808080"/><rect x="7" y="6" width="1" height="1" fill="#fff"/><rect x="8" y="6" width="1" height="1" fill="#808080"/><rect x="9" y="6" width="1" height="1" fill="#c0c0c0"/><rect x="10" y="6" width="3" height="1" fill="#fff"/><rect x="13" y="6" width="2" height="1" fill="#000"/><rect x="3" y="7" width="2" height="1" fill="#808080"/><rect x="5" y="7" width="2" height="1" fill="#fff"/><rect x="7" y="7" width="2" height="1" fill="#c0c0c0"/><rect x="9" y="7" width="2" height="1" fill="#808080"/><rect x="11" y="7" width="2" height="1" fill="#c0c0c0"/><rect x="13" y="7" width="1" height="1" fill="#000"/><rect x="14" y="7" width="2" height="1" fill="#808080"/><rect x="16" y="7" width="1" height="1" fill="#000"/><rect x="2" y="8" width="1" height="1" fill="#808080"/><rect x="3" y="8" width="3" height="1" fill="#fff"/><rect x="6" y="8" width="1" height="1" fill="#0f0"/><rect x="7" y="8" width="1" height="1" fill="#808000"/><rect x="8" y="8" width="2" height="1" fill="#c0c0c0"/><rect x="10" y="8" width="1" height="1" fill="#808080"/><rect x="11" y="8" width="1" height="1" fill="#c0c0c0"/><rect x="12" y="8" width="1" height="1" fill="#808080"/><rect x="13" y="8" width="1" height="1" fill="#000"/><rect x="14" y="8" width="2" height="1" fill="#808080"/><rect x="16" y="8" width="1" height="1" fill="#000"/><rect x="2" y="9" width="1" height="1" fill="#808080"/><rect x="3" y="9" width="5" height="1" fill="#fff"/><rect x="8" y="9" width="2" height="1" fill="#f00"/><rect x="10" y="9" width="1" height="1" fill="#c0c0c0"/><rect x="11" y="9" width="6" height="1" fill="#808080"/><rect x="17" y="9" width="1" height="1" fill="#000"/><rect x="2" y="10" width="1" height="1" fill="#808080"/><rect x="3" y="10" width="1" height="1" fill="#fff"/><rect x="4" y="10" width="4" height="1" fill="#c0c0c0"/><rect x="8" y="10" width="1" height="1" fill="#fff"/><rect x="9" y="10" width="8" height="1" fill="#808080"/><rect x="17" y="10" width="1" height="1" fill="#000"/><rect x="2" y="11" width="1" height="1" fill="#808080"/><rect x="3" y="11" width="1" height="1" fill="#fff"/><rect x="4" y="11" width="5" height="1" fill="#c0c0c0"/><rect x="9" y="11" width="8" height="1" fill="#808080"/><rect x="17" y="11" width="1" height="1" fill="#000"/><rect x="2" y="12" width="1" height="1" fill="#808080"/><rect x="3" y="12" width="6" height="1" fill="#c0c0c0"/><rect x="9" y="12" width="7" height="1" fill="#808080"/><rect x="16" y="12" width="2" height="1" fill="#000"/><rect x="3" y="13" width="1" height="1" fill="#000"/><rect x="4" y="13" width="6" height="1" fill="#c0c0c0"/><rect x="10" y="13" width="3" height="1" fill="#808080"/><rect x="13" y="13" width="2" height="1" fill="#000"/><rect x="15" y="13" width="1" height="1" fill="#808080"/><rect x="16" y="13" width="1" height="1" fill="#000"/><rect x="3" y="14" width="1" height="1" fill="#000"/><rect x="4" y="14" width="2" height="1" fill="#c0c0c0"/><rect x="6" y="14" width="2" height="1" fill="#808080"/><rect x="8" y="14" width="1" height="1" fill="#c0c0c0"/><rect x="9" y="14" width="2" height="1" fill="#808080"/><rect x="11" y="14" width="2" height="1" fill="#000"/><rect x="13" y="14" width="2" height="1" fill="#808080"/><rect x="15" y="14" width="1" height="1" fill="#000"/><rect x="4" y="15" width="2" height="1" fill="#000"/><rect x="6" y="15" width="1" height="1" fill="#c0c0c0"/><rect x="7" y="15" width="1" height="1" fill="#808080"/><rect x="8" y="15" width="1" height="1" fill="#c0c0c0"/><rect x="9" y="15" width="2" height="1" fill="#000"/><rect x="11" y="15" width="2" height="1" fill="#808080"/><rect x="13" y="15" width="2" height="1" fill="#000"/><rect x="6" y="16" width="2" height="1" fill="#000"/><rect x="8" y="16" width="1" height="1" fill="#808080"/><rect x="9" y="16" width="1" height="1" fill="#c0c0c0"/><rect x="10" y="16" width="2" height="1" fill="#000"/><rect x="8" y="17" width="3" height="1" fill="#000"/></svg>
<svg class="a" style="left:976px;top:11px" width="6" height="2" shape-rendering="crispEdges"><rect x="0" y="0" width="6" height="1" fill="#000"/><rect x="0" y="1" width="6" height="1" fill="#000"/></svg>
<svg class="a" style="left:991px;top:4px" width="8" height="9" shape-rendering="crispEdges"><rect x="2" y="0" width="6" height="1" fill="#000"/><rect x="2" y="1" width="6" height="1" fill="#000"/><rect x="2" y="2" width="1" height="1" fill="#000"/><rect x="7" y="2" width="1" height="1" fill="#000"/><rect x="0" y="3" width="6" height="1" fill="#000"/><rect x="7" y="3" width="1" height="1" fill="#000"/><rect x="0" y="4" width="6" height="1" fill="#000"/><rect x="7" y="4" width="1" height="1" fill="#000"/><rect x="0" y="5" width="1" height="1" fill="#000"/><rect x="5" y="5" width="3" height="1" fill="#000"/><rect x="0" y="6" width="1" height="1" fill="#000"/><rect x="5" y="6" width="1" height="1" fill="#000"/><rect x="0" y="7" width="1" height="1" fill="#000"/><rect x="5" y="7" width="1" height="1" fill="#000"/><rect x="0" y="8" width="6" height="1" fill="#000"/></svg>
<svg class="a" style="left:1010px;top:5px" width="8" height="7" shape-rendering="crispEdges"><rect x="0" y="0" width="2" height="1" fill="#000"/><rect x="6" y="0" width="2" height="1" fill="#000"/><rect x="1" y="1" width="2" height="1" fill="#000"/><rect x="5" y="1" width="2" height="1" fill="#000"/><rect x="2" y="2" width="4" height="1" fill="#000"/><rect x="3" y="3" width="2" height="1" fill="#000"/><rect x="2" y="4" width="4" height="1" fill="#000"/><rect x="1" y="5" width="2" height="1" fill="#000"/><rect x="5" y="5" width="2" height="1" fill="#000"/><rect x="0" y="6" width="2" height="1" fill="#000"/><rect x="6" y="6" width="2" height="1" fill="#000"/></svg>
<svg class="a" style="left:709px;top:195px" width="6" height="2" shape-rendering="crispEdges"><rect x="0" y="0" width="6" height="1" fill="#000"/><rect x="0" y="1" width="6" height="1" fill="#000"/></svg>
<svg class="a" style="left:724px;top:188px" width="9" height="9" shape-rendering="crispEdges"><rect x="0" y="0" width="9" height="1" fill="#000"/><rect x="0" y="1" width="9" height="1" fill="#000"/><rect x="0" y="2" width="1" height="1" fill="#000"/><rect x="8" y="2" width="1" height="1" fill="#000"/><rect x="0" y="3" width="1" height="1" fill="#000"/><rect x="8" y="3" width="1" height="1" fill="#000"/><rect x="0" y="4" width="1" height="1" fill="#000"/><rect x="8" y="4" width="1" height="1" fill="#000"/><rect x="0" y="5" width="1" height="1" fill="#000"/><rect x="8" y="5" width="1" height="1" fill="#000"/><rect x="0" y="6" width="1" height="1" fill="#000"/><rect x="8" y="6" width="1" height="1" fill="#000"/><rect x="0" y="7" width="1" height="1" fill="#000"/><rect x="8" y="7" width="1" height="1" fill="#000"/><rect x="0" y="8" width="9" height="1" fill="#000"/></svg>
<svg class="a" style="left:743px;top:189px" width="8" height="7" shape-rendering="crispEdges"><rect x="0" y="0" width="2" height="1" fill="#000"/><rect x="6" y="0" width="2" height="1" fill="#000"/><rect x="1" y="1" width="2" height="1" fill="#000"/><rect x="5" y="1" width="2" height="1" fill="#000"/><rect x="2" y="2" width="4" height="1" fill="#000"/><rect x="3" y="3" width="2" height="1" fill="#000"/><rect x="2" y="4" width="4" height="1" fill="#000"/><rect x="1" y="5" width="2" height="1" fill="#000"/><rect x="5" y="5" width="2" height="1" fill="#000"/><rect x="0" y="6" width="2" height="1" fill="#000"/><rect x="6" y="6" width="2" height="1" fill="#000"/></svg>
<svg class="a" style="left:931px;top:750px" width="12" height="9" shape-rendering="crispEdges"><rect x="0" y="0" width="5" height="1" fill="#fff"/><rect x="0" y="1" width="1" height="1" fill="#fff"/><rect x="0" y="2" width="1" height="1" fill="#fff"/><rect x="0" y="3" width="1" height="1" fill="#fff"/><rect x="7" y="3" width="1" height="1" fill="#fff"/><rect x="9" y="3" width="2" height="1" fill="#fff"/><rect x="0" y="4" width="4" height="1" fill="#fff"/><rect x="7" y="4" width="2" height="1" fill="#fff"/><rect x="11" y="4" width="1" height="1" fill="#fff"/><rect x="0" y="5" width="1" height="1" fill="#fff"/><rect x="7" y="5" width="1" height="1" fill="#fff"/><rect x="11" y="5" width="1" height="1" fill="#fff"/><rect x="0" y="6" width="1" height="1" fill="#fff"/><rect x="7" y="6" width="1" height="1" fill="#fff"/><rect x="11" y="6" width="1" height="1" fill="#fff"/><rect x="0" y="7" width="1" height="1" fill="#fff"/><rect x="7" y="7" width="1" height="1" fill="#fff"/><rect x="11" y="7" width="1" height="1" fill="#fff"/><rect x="0" y="8" width="5" height="1" fill="#fff"/><rect x="7" y="8" width="1" height="1" fill="#fff"/><rect x="11" y="8" width="1" height="1" fill="#fff"/></svg>
<svg class="a" style="left:501px;top:397px" width="7" height="4" shape-rendering="crispEdges"><rect x="0" y="0" width="7" height="1" fill="#000"/><rect x="1" y="1" width="5" height="1" fill="#000"/><rect x="2" y="2" width="3" height="1" fill="#000"/><rect x="3" y="3" width="1" height="1" fill="#000"/></svg>
<!--/ICONS-->
</body></html>
